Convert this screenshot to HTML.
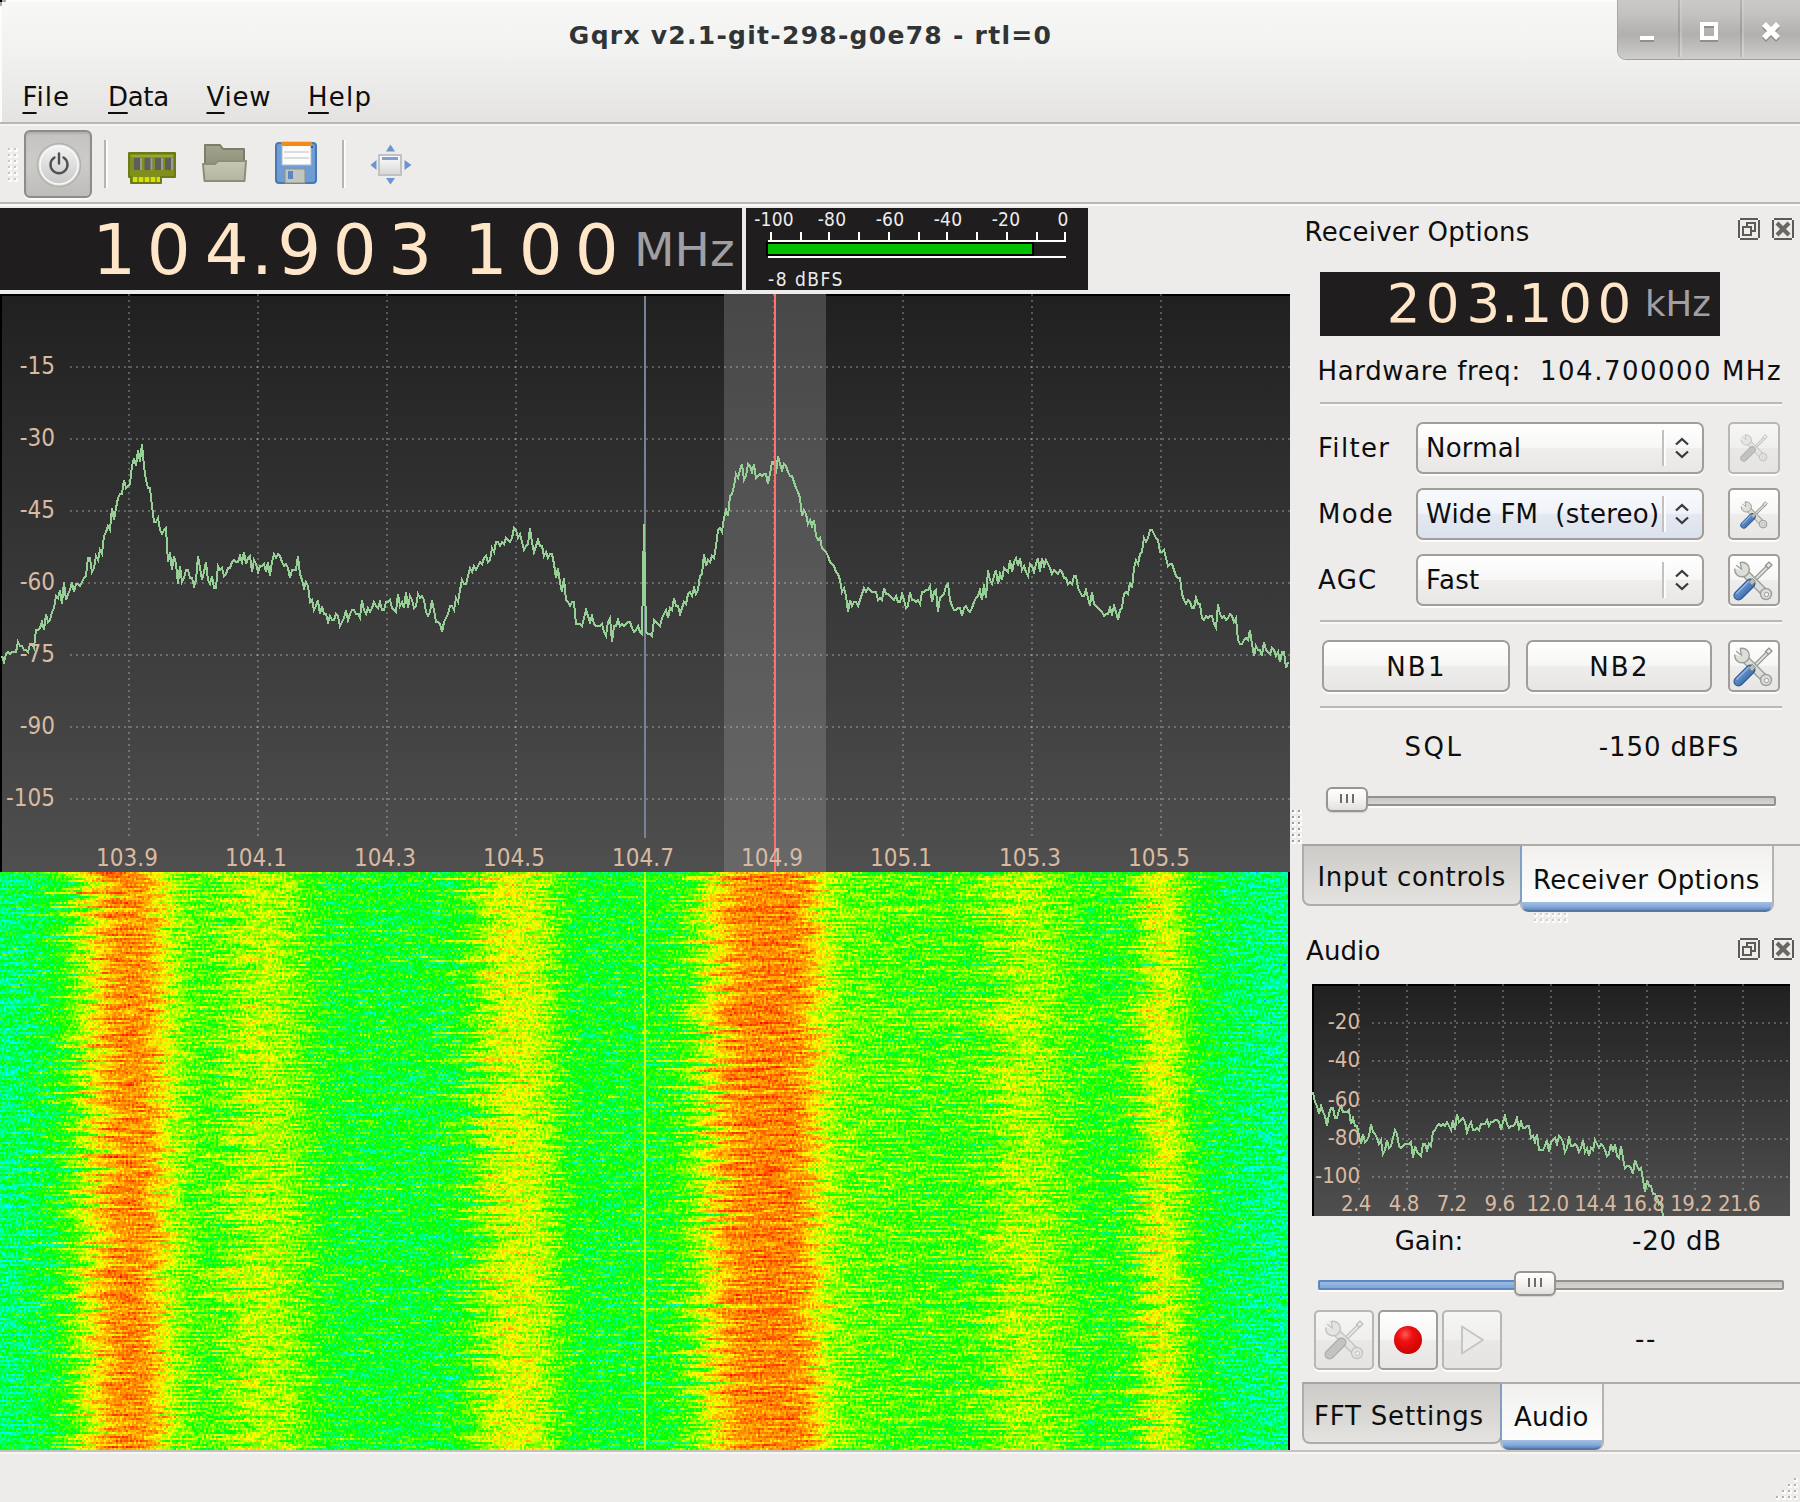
<!DOCTYPE html>
<html lang="en"><head><meta charset="utf-8"><title>Gqrx v2.1-git-298-g0e78 - rtl=0</title>
<style>
html,body{margin:0;padding:0}
body{width:1800px;height:1502px;overflow:hidden;background:#edeceb;position:relative;
 font-family:"DejaVu Sans","Liberation Sans",sans-serif;font-size:26px;color:#0e0e0e}
.a{position:absolute}
.t{position:absolute;white-space:nowrap;line-height:30px;height:30px}
.pf{font-family:"DejaVu Sans Condensed","DejaVu Sans","Liberation Sans",sans-serif}
.btn{position:absolute;box-sizing:border-box;border:2px solid #a19e99;border-radius:7px;
 background:linear-gradient(#ffffff,#f6f6f5 49%,#eeedec 51%,#e7e6e4);box-shadow:0 2px 0 rgba(255,255,255,.8)}
.tb{border-radius:5px}
.btn.dis{border-color:#b9b7b3;background:linear-gradient(#f6f6f5,#f0efee 49%,#e9e8e7 51%,#e5e4e2)}
.sep{position:absolute;height:2px;background:#bab8b4;box-shadow:0 2px 0 #f8f8f7}
svg{position:absolute;overflow:visible}
.bd{font-family:"DejaVu Sans","Liberation Sans",sans-serif}
</style></head><body>
<div class="a" style="left:0;top:0;width:1800px;height:122px;background:linear-gradient(#f8f8f7,#f1f1f0 45%,#e4e3e1)"></div>
<div class="a" style="left:0;top:0;width:1800px;height:2px;background:#fdfdfd"></div>
<div class="a" style="left:0;top:122px;width:1800px;height:2px;background:#b9b7b3"></div>
<div class="a" style="left:0;top:124px;width:1800px;height:2px;background:#f4f4f3"></div>
<div class="a" style="left:0;top:2px;width:2px;height:120px;background:#fcfcfc"></div>
<div class="a" style="left:0;top:0;width:2px;height:2px;background:#000"></div><div class="a" style="left:2px;top:0;width:4px;height:2px;background:#a9a9a8"></div><div class="a" style="left:0;top:2px;width:2px;height:4px;background:#a9a9a8"></div>
<div class="a" style="left:1798px;top:0;width:2px;height:2px;background:#000"></div><div class="a" style="left:1794px;top:0;width:4px;height:2px;background:#777"></div><div class="a" style="left:1798px;top:2px;width:2px;height:4px;background:#777"></div>
<div class="t" style="left:0;width:1620px;top:21px;text-align:center;font-weight:bold;font-size:25px;letter-spacing:1.27px;color:#303437;text-indent:1px">Gqrx v2.1-git-298-g0e78 - rtl=0</div>
<div class="a" style="left:1618px;top:0;width:182px;height:59px;border-radius:0 0 0 8px;background:linear-gradient(#cbc9c7,#c4c2c0 25%,#b1b0af 58%,#bfbebc 80%,#cfcecc);box-shadow:0 1px 0 #9f9e9c, -1px 0 0 #a9a8a6"></div>
<div class="a" style="left:1678px;top:0;width:2px;height:57px;background:linear-gradient(#b5b3b1,#9d9c9a 55%,#b9b8b6)"></div><div class="a" style="left:1680px;top:0;width:2px;height:57px;background:linear-gradient(#d3d1cf,#c0bfbd 55%,#d6d5d3)"></div>
<div class="a" style="left:1740px;top:0;width:2px;height:57px;background:linear-gradient(#b5b3b1,#9d9c9a 55%,#b9b8b6)"></div><div class="a" style="left:1742px;top:0;width:2px;height:57px;background:linear-gradient(#d3d1cf,#c0bfbd 55%,#d6d5d3)"></div>
<svg style="left:1618px;top:0" width="182" height="60" viewBox="1618 0 182 60"><g fill="#8f8e8c"><rect x="1640" y="38" width="14" height="4"/></g><rect x="1640" y="36" width="14" height="4" fill="#fff"/><rect x="1702" y="26" width="14" height="14" fill="none" stroke="#8f8e8c" stroke-width="4"/><rect x="1702" y="24" width="14" height="14" fill="none" stroke="#fff" stroke-width="4"/><path d="M1764 26 L1778 40 M1778 26 L1764 40" stroke="#8f8e8c" stroke-width="5.5" fill="none"/><path d="M1764 24 L1778 38 M1778 24 L1764 38" stroke="#fff" stroke-width="5.5" fill="none"/></svg>
<div class="t" style="left:22.5px;top:82px;letter-spacing:1.0px"><span style="text-decoration:underline;text-decoration-thickness:2px;text-underline-offset:6px">F</span>ile</div>
<div class="t" style="left:108px;top:82px;letter-spacing:-0.3px"><span style="text-decoration:underline;text-decoration-thickness:2px;text-underline-offset:6px">D</span>ata</div>
<div class="t" style="left:206.5px;top:82px;letter-spacing:0.8px"><span style="text-decoration:underline;text-decoration-thickness:2px;text-underline-offset:6px">V</span>iew</div>
<div class="t" style="left:308px;top:82px;letter-spacing:1.2px"><span style="text-decoration:underline;text-decoration-thickness:2px;text-underline-offset:6px">H</span>elp</div>
<div class="a" style="left:0;top:202px;width:1800px;height:2px;background:#b9b7b3"></div>
<div class="a" style="left:0;top:204px;width:1800px;height:2px;background:#f8f8f7"></div>
<svg style="left:0;top:0" width="30" height="200"><rect x="8" y="148" width="4" height="4" fill="#fbfbfa"/><rect x="8" y="148" width="2" height="2" fill="#c9c7c4"/><rect x="14" y="148" width="4" height="4" fill="#fbfbfa"/><rect x="14" y="148" width="2" height="2" fill="#c9c7c4"/><rect x="8" y="154" width="4" height="4" fill="#fbfbfa"/><rect x="8" y="154" width="2" height="2" fill="#c9c7c4"/><rect x="14" y="154" width="4" height="4" fill="#fbfbfa"/><rect x="14" y="154" width="2" height="2" fill="#c9c7c4"/><rect x="8" y="160" width="4" height="4" fill="#fbfbfa"/><rect x="8" y="160" width="2" height="2" fill="#c9c7c4"/><rect x="14" y="160" width="4" height="4" fill="#fbfbfa"/><rect x="14" y="160" width="2" height="2" fill="#c9c7c4"/><rect x="8" y="166" width="4" height="4" fill="#fbfbfa"/><rect x="8" y="166" width="2" height="2" fill="#c9c7c4"/><rect x="14" y="166" width="4" height="4" fill="#fbfbfa"/><rect x="14" y="166" width="2" height="2" fill="#c9c7c4"/><rect x="8" y="172" width="4" height="4" fill="#fbfbfa"/><rect x="8" y="172" width="2" height="2" fill="#c9c7c4"/><rect x="14" y="172" width="4" height="4" fill="#fbfbfa"/><rect x="14" y="172" width="2" height="2" fill="#c9c7c4"/><rect x="8" y="178" width="4" height="4" fill="#fbfbfa"/><rect x="8" y="178" width="2" height="2" fill="#c9c7c4"/><rect x="14" y="178" width="4" height="4" fill="#fbfbfa"/><rect x="14" y="178" width="2" height="2" fill="#c9c7c4"/></svg>
<div class="a" style="left:24px;top:130px;width:68px;height:68px;box-sizing:border-box;border:2px solid #8e8c88;border-radius:6px;background:linear-gradient(#c5c3c0,#cdcbc8 50%,#bebcb8);box-shadow:0 2px 0 #fafafa, inset 0 2px 2px rgba(0,0,0,.10)"></div>
<svg style="left:34px;top:140px" width="50" height="50" viewBox="0 0 50 50"><defs><linearGradient id="pw" x1="0" y1="0" x2="0" y2="1"><stop offset="0" stop-color="#f2f2f2"/><stop offset="1" stop-color="#c9c9c9"/></linearGradient></defs><circle cx="25" cy="25" r="21.5" fill="#d9d8d6" stroke="#b3b1ae" stroke-width="1.5"/><circle cx="25" cy="25" r="19" fill="url(#pw)" stroke="#fafafa" stroke-width="1.5"/><path d="M20.5 17.5 A8.5 8.5 0 1 0 29.5 17.5" fill="none" stroke="#505050" stroke-width="2.4" stroke-linecap="round"/><path d="M25 13.5 V23.5" stroke="#505050" stroke-width="2.4" stroke-linecap="round"/></svg>
<div class="a" style="left:104px;top:140px;width:2px;height:48px;background:#b6b4b0"></div><div class="a" style="left:106px;top:140px;width:2px;height:48px;background:#fbfbfa"></div>
<div class="a" style="left:342px;top:140px;width:2px;height:48px;background:#b6b4b0"></div><div class="a" style="left:344px;top:140px;width:2px;height:48px;background:#fbfbfa"></div>
<svg style="left:124px;top:146px" width="56" height="44" viewBox="124 146 56 44"><path d="M129 153 H175 V177 H161 V183 H131 V177 H129 Z" fill="#808e1d" stroke="#6e7a17" stroke-width="2" stroke-linejoin="round"/><rect x="131" y="155" width="42" height="2" fill="#9aa832"/><rect x="134" y="158" width="8" height="12" fill="#5d5f5b"/><rect x="140" y="158" width="2" height="12" fill="#9b9d90"/><rect x="144.5" y="158" width="8" height="12" fill="#5d5f5b"/><rect x="150.5" y="158" width="2" height="12" fill="#9b9d90"/><rect x="155" y="158" width="8" height="12" fill="#5d5f5b"/><rect x="161" y="158" width="2" height="12" fill="#9b9d90"/><rect x="165" y="158" width="8" height="12" fill="#5d5f5b"/><rect x="171" y="158" width="2" height="12" fill="#9b9d90"/><rect x="133" y="177" width="27" height="5" fill="#d4e300"/><rect x="137" y="177" width="2" height="5" fill="#98a510"/><rect x="143" y="177" width="2" height="5" fill="#98a510"/><rect x="149" y="177" width="2" height="5" fill="#98a510"/><rect x="155" y="177" width="2" height="5" fill="#98a510"/></svg>
<svg style="left:196px;top:138px" width="56" height="50" viewBox="196 138 56 50"><defs><linearGradient id="fo1" x1="0" y1="0" x2="0" y2="1"><stop offset="0" stop-color="#a3a48d"/><stop offset="1" stop-color="#84856f"/></linearGradient><linearGradient id="fo2" x1="0" y1="0" x2="0" y2="1"><stop offset="0" stop-color="#c6c7b4"/><stop offset="1" stop-color="#b4b5a0"/></linearGradient></defs><path d="M205 145 H220 L223 149 H244 V178 H205 Z" fill="url(#fo1)" stroke="#7d7e69" stroke-width="2" stroke-linejoin="round"/><path d="M203 164 H215 L218 161 H246 L244.500 181 H204.500 Z" fill="url(#fo2)" stroke="#8d8e79" stroke-width="2" stroke-linejoin="round"/></svg>
<svg style="left:272px;top:138px" width="50" height="50" viewBox="272 138 50 50"><path d="M279 143 H313 Q316 143 316 146 V180 Q316 183 313 183 H279 Q276 183 276 180 V146 Q276 143 279 143 Z" fill="#6f9cd3" stroke="#4a78b4" stroke-width="2"/><rect x="282" y="142" width="29" height="23" fill="#fdfdfd" stroke="#a9bcd6" stroke-width="1"/><rect x="282" y="142" width="29" height="4" fill="#f58a17"/><rect x="284" y="151" width="25" height="2" fill="#dcdcdc"/><rect x="284" y="157" width="25" height="2" fill="#dcdcdc"/><rect x="285" y="169" width="20" height="14" fill="#c3c5bf" stroke="#8f918b" stroke-width="1"/><rect x="288" y="171" width="5" height="8" fill="#5b86c2"/><rect x="311" y="146" width="2" height="2" fill="#33578c"/></svg>
<svg style="left:364px;top:140px" width="54" height="50" viewBox="364 140 54 50"><defs><linearGradient id="fs" x1="0" y1="0" x2="0" y2="1"><stop offset="0" stop-color="#ffffff"/><stop offset="1" stop-color="#d6d6d6"/></linearGradient></defs><rect x="379" y="155" width="22" height="20" fill="url(#fs)" stroke="#c2c2c0" stroke-width="2"/><rect x="382" y="157" width="16" height="3" fill="#7ea1d2"/><g fill="#6b95cf"><path d="M390.500 144.500 L395 151.500 H386 Z"/><path d="M390.500 184.500 L395 178 H386 Z"/><path d="M370.500 165 L376.500 160 V170 Z"/><path d="M411.500 165 L404.500 160 V170 Z"/></g></svg>
<div class="a" style="left:0;top:208px;width:742px;height:82px;background:#1f1d1d"></div>
<div class="t bd" style="left:84.25px;width:60px;top:208.5px;height:82px;line-height:82px;text-align:center;font-size:69px;color:#ffe6c8">1</div>
<div class="t bd" style="left:138.75px;width:60px;top:208.5px;height:82px;line-height:82px;text-align:center;font-size:69px;color:#ffe6c8">0</div>
<div class="t bd" style="left:196.75px;width:60px;top:208.5px;height:82px;line-height:82px;text-align:center;font-size:69px;color:#ffe6c8">4</div>
<div class="t bd" style="left:269.25px;width:60px;top:208.5px;height:82px;line-height:82px;text-align:center;font-size:69px;color:#ffe6c8">9</div>
<div class="t bd" style="left:324.75px;width:60px;top:208.5px;height:82px;line-height:82px;text-align:center;font-size:69px;color:#ffe6c8">0</div>
<div class="t bd" style="left:380.25px;width:60px;top:208.5px;height:82px;line-height:82px;text-align:center;font-size:69px;color:#ffe6c8">3</div>
<div class="t bd" style="left:455.75px;width:60px;top:208.5px;height:82px;line-height:82px;text-align:center;font-size:69px;color:#ffe6c8">1</div>
<div class="t bd" style="left:510.75px;width:60px;top:208.5px;height:82px;line-height:82px;text-align:center;font-size:69px;color:#ffe6c8">0</div>
<div class="t bd" style="left:566.75px;width:60px;top:208.5px;height:82px;line-height:82px;text-align:center;font-size:69px;color:#ffe6c8">0</div>
<div class="t bd" style="left:247.00px;width:30px;top:208.5px;height:82px;line-height:82px;text-align:center;font-size:69px;color:#ffe6c8">.</div>
<div class="t bd" style="left:634px;top:208.500px;height:82px;line-height:82px;font-size:47px;color:#a0a0a4">MHz</div>
<div class="a" style="left:746px;top:208px;width:342px;height:82px;background:#1f1d1d"></div>
<svg style="left:746px;top:208px" width="342" height="82" viewBox="746 208 342 82" shape-rendering="crispEdges"><rect x="768" y="240" width="298" height="2" fill="#fff"/><rect x="770" y="232" width="2" height="8" fill="#fff"/><rect x="800" y="232" width="2" height="8" fill="#fff"/><rect x="828" y="232" width="2" height="8" fill="#fff"/><rect x="858" y="232" width="2" height="8" fill="#fff"/><rect x="888" y="232" width="2" height="8" fill="#fff"/><rect x="918" y="232" width="2" height="8" fill="#fff"/><rect x="946" y="232" width="2" height="8" fill="#fff"/><rect x="976" y="232" width="2" height="8" fill="#fff"/><rect x="1006" y="232" width="2" height="8" fill="#fff"/><rect x="1036" y="232" width="2" height="8" fill="#fff"/><rect x="1064" y="232" width="2" height="8" fill="#fff"/><rect x="766" y="242" width="268" height="14" fill="#000"/><rect x="768" y="244" width="264" height="10" fill="#00be00"/><rect x="768" y="256" width="298" height="2" fill="#fff"/></svg>
<div class="t pf" style="left:734px;width:80px;text-align:center;top:204px;font-size:19px;color:#ececec;letter-spacing:0.2px">-100</div>
<div class="t pf" style="left:792px;width:80px;text-align:center;top:204px;font-size:19px;color:#ececec;letter-spacing:0.2px">-80</div>
<div class="t pf" style="left:850px;width:80px;text-align:center;top:204px;font-size:19px;color:#ececec;letter-spacing:0.2px">-60</div>
<div class="t pf" style="left:908px;width:80px;text-align:center;top:204px;font-size:19px;color:#ececec;letter-spacing:0.2px">-40</div>
<div class="t pf" style="left:966px;width:80px;text-align:center;top:204px;font-size:19px;color:#ececec;letter-spacing:0.2px">-20</div>
<div class="t pf" style="left:1023px;width:80px;text-align:center;top:204px;font-size:19px;color:#ececec;letter-spacing:0.2px">0</div>
<div class="t pf" style="left:768px;top:264px;font-size:19px;color:#ececec;letter-spacing:1.5px">-8 dBFS</div>
<svg style="left:0;top:294px" width="1290" height="578" viewBox="0 294 1290 578"><defs><linearGradient id="pg" x1="0" y1="0" x2="0" y2="1"><stop offset="0" stop-color="#202020"/><stop offset="1" stop-color="#4f4f4f"/></linearGradient></defs><rect x="0" y="294" width="1290" height="578" fill="url(#pg)"/><rect x="0" y="294" width="1290" height="2" fill="#000"/><rect x="0" y="294" width="2" height="578" fill="#000"/><rect x="724" y="294" width="102" height="2" fill="#434343"/><rect x="724" y="296" width="102" height="576" fill="#a0a0a4" fill-opacity="0.31"/><g stroke="#f0f0f0" stroke-opacity="0.27" stroke-width="2" stroke-dasharray="2 4" shape-rendering="crispEdges"><path d="M129 294V836"/><path d="M258 294V836"/><path d="M387 294V836"/><path d="M516 294V836"/><path d="M774 294V836"/><path d="M903 294V836"/><path d="M1032 294V836"/><path d="M1161 294V836"/><path d="M70 367H1290"/><path d="M70 439H1290"/><path d="M70 511H1290"/><path d="M70 583H1290"/><path d="M70 655H1290"/><path d="M70 727H1290"/><path d="M70 799H1290"/></g><rect x="644" y="296" width="2" height="542" fill="#788296" shape-rendering="crispEdges"/><path d="M2 656L4 662L6 654L8 652L10 654L12 652L14 652L16 652L18 642L20 646L22 646L24 650L26 650L28 652L30 644L32 644L34 648L36 630L38 630L40 628L42 622L44 630L46 614L48 622L50 620L52 612L54 608L56 596L58 598L60 590L62 604L64 582L66 600L68 594L70 590L72 582L74 592L76 584L78 584L80 586L82 582L84 578L86 576L88 558L90 558L92 572L94 568L96 556L98 560L100 550L102 554L104 536L106 532L108 526L110 530L112 508L114 520L116 508L118 498L120 494L122 494L124 480L126 488L128 486L130 484L132 466L134 458L136 466L138 450L140 462L142 444L144 466L146 480L148 488L150 488L152 506L154 522L156 522L158 518L160 530L162 534L164 530L166 528L168 562L170 552L172 570L174 556L176 564L178 584L180 566L182 582L184 578L186 570L188 570L190 578L192 578L194 586L196 580L198 556L200 568L202 580L204 572L206 562L208 580L210 584L212 576L214 588L216 588L218 566L220 570L222 568L224 576L226 574L228 568L230 568L232 562L234 560L236 562L238 562L240 556L242 562L244 552L246 564L248 558L250 556L252 572L254 560L256 564L258 572L260 566L262 566L264 564L266 572L268 562L270 576L272 562L274 554L276 558L278 554L280 556L282 562L284 566L286 564L288 568L290 578L292 570L294 570L296 570L298 556L300 574L302 580L304 588L306 582L308 586L310 602L312 600L314 610L316 606L318 600L320 614L322 606L324 614L326 614L328 622L330 616L332 620L334 620L336 614L338 616L340 626L342 622L344 618L346 610L348 620L350 614L352 610L354 610L356 614L358 614L360 618L362 600L364 610L366 614L368 608L370 612L372 608L374 602L376 606L378 608L380 602L382 610L384 610L386 602L388 602L390 600L392 608L394 610L396 612L398 594L400 606L402 602L404 608L406 592L408 608L410 596L412 600L414 608L416 606L418 594L420 598L422 596L424 600L426 612L428 616L430 612L432 600L434 610L436 622L438 622L440 624L442 632L444 622L446 618L448 614L450 606L452 606L454 610L456 598L458 602L460 590L462 580L464 584L466 584L468 576L470 568L472 572L474 566L476 570L478 566L480 562L482 564L484 558L486 556L488 562L490 560L492 548L494 552L496 542L498 542L500 546L502 542L504 544L506 538L508 540L510 542L512 538L514 528L516 530L518 538L520 534L522 542L524 550L526 546L528 544L530 528L532 542L534 552L536 546L538 540L540 546L542 546L544 556L546 552L548 558L550 554L552 554L554 564L556 578L558 568L560 582L562 592L564 578L566 600L568 602L570 606L572 602L574 602L576 624L578 624L580 624L582 626L584 618L586 610L588 616L590 622L592 616L594 624L596 626L598 626L600 626L602 624L604 632L606 636L608 622L610 618L612 642L614 626L616 626L618 620L620 626L622 624L624 626L626 624L628 622L630 622L632 628L634 632L636 630L638 626L640 632L642 634L644 524L646 632L648 634L650 634L652 636L654 620L656 622L658 624L660 626L662 618L664 614L666 610L668 618L670 608L672 610L674 598L676 606L678 606L680 614L682 608L684 602L686 604L688 594L690 592L692 596L694 588L696 594L698 590L700 576L702 574L704 554L706 566L708 560L710 562L712 556L714 558L716 546L718 530L720 528L722 532L724 518L726 510L728 516L730 496L732 494L734 486L736 474L738 478L740 470L742 464L744 480L746 476L748 464L750 466L752 472L754 464L756 478L758 476L760 474L762 476L764 474L766 474L768 484L770 474L772 462L774 462L776 474L778 456L780 464L782 470L784 464L786 466L788 472L790 476L792 476L794 482L796 488L798 492L800 498L802 516L804 510L806 514L808 524L810 520L812 526L814 520L816 536L818 540L820 538L822 548L824 550L826 552L828 556L830 562L832 564L834 566L836 572L838 574L840 580L842 592L844 588L846 596L848 612L850 600L852 606L854 602L856 602L858 606L860 600L862 594L864 588L866 592L868 588L870 590L872 592L874 592L876 592L878 600L880 598L882 600L884 588L886 594L888 594L890 596L892 598L894 600L896 596L898 602L900 602L902 594L904 600L906 608L908 606L910 592L912 600L914 600L916 602L918 600L920 604L922 592L924 592L926 590L928 590L930 586L932 602L934 592L936 590L938 612L940 598L942 596L944 594L946 586L948 584L950 600L952 606L954 610L956 610L958 608L960 608L962 616L964 608L966 606L968 610L970 612L972 608L974 602L976 598L978 596L980 590L982 600L984 584L986 598L988 570L990 580L992 584L994 576L996 570L998 584L1000 574L1002 580L1004 568L1006 570L1008 572L1010 560L1012 572L1014 562L1016 558L1018 566L1020 558L1022 570L1024 566L1026 572L1028 576L1030 564L1032 566L1034 572L1036 564L1038 558L1040 572L1042 558L1044 566L1046 560L1048 564L1050 568L1052 574L1054 570L1056 572L1058 574L1060 570L1062 572L1064 578L1066 578L1068 584L1070 582L1072 584L1074 576L1076 576L1078 588L1080 592L1082 596L1084 596L1086 590L1088 598L1090 606L1092 592L1094 604L1096 606L1098 608L1100 610L1102 612L1104 616L1106 614L1108 614L1110 608L1112 614L1114 606L1116 612L1118 620L1120 610L1122 608L1124 594L1126 592L1128 594L1130 582L1132 588L1134 568L1136 560L1138 564L1140 554L1142 552L1144 538L1146 542L1148 538L1150 530L1152 530L1154 534L1156 538L1158 540L1160 552L1162 552L1164 550L1166 558L1168 566L1170 564L1172 564L1174 570L1176 576L1178 578L1180 578L1182 594L1184 600L1186 604L1188 600L1190 602L1192 608L1194 608L1196 598L1198 604L1200 604L1202 618L1204 620L1206 616L1208 618L1210 616L1212 616L1214 624L1216 628L1218 604L1220 614L1222 618L1224 616L1226 620L1228 618L1230 614L1232 616L1234 622L1236 618L1238 640L1240 644L1242 644L1244 640L1246 638L1248 640L1250 630L1252 644L1254 656L1256 646L1258 650L1260 650L1262 656L1264 642L1266 650L1268 652L1270 654L1272 648L1274 650L1276 656L1278 652L1280 662L1282 652L1284 652L1286 668L1288 662" fill="none" stroke="#97d097" stroke-width="2" stroke-linejoin="miter" shape-rendering="crispEdges"/><rect x="774" y="294" width="2" height="578" fill="#ff7171" shape-rendering="crispEdges"/></svg>
<div class="t pf" style="left:0;width:55px;text-align:right;top:351px;font-size:24px;color:#d8baa1">-15</div>
<div class="t pf" style="left:0;width:55px;text-align:right;top:423px;font-size:24px;color:#d8baa1">-30</div>
<div class="t pf" style="left:0;width:55px;text-align:right;top:495px;font-size:24px;color:#d8baa1">-45</div>
<div class="t pf" style="left:0;width:55px;text-align:right;top:567px;font-size:24px;color:#d8baa1">-60</div>
<div class="t pf" style="left:0;width:55px;text-align:right;top:639px;font-size:24px;color:#d8baa1">-75</div>
<div class="t pf" style="left:0;width:55px;text-align:right;top:711px;font-size:24px;color:#d8baa1">-90</div>
<div class="t pf" style="left:0;width:55px;text-align:right;top:783px;font-size:24px;color:#d8baa1">-105</div>
<div class="t pf" style="left:77px;width:100px;text-align:center;top:843px;font-size:24px;color:#d8baa1">103.9</div>
<div class="t pf" style="left:206px;width:100px;text-align:center;top:843px;font-size:24px;color:#d8baa1">104.1</div>
<div class="t pf" style="left:335px;width:100px;text-align:center;top:843px;font-size:24px;color:#d8baa1">104.3</div>
<div class="t pf" style="left:464px;width:100px;text-align:center;top:843px;font-size:24px;color:#d8baa1">104.5</div>
<div class="t pf" style="left:593px;width:100px;text-align:center;top:843px;font-size:24px;color:#d8baa1">104.7</div>
<div class="t pf" style="left:722px;width:100px;text-align:center;top:843px;font-size:24px;color:#d8baa1">104.9</div>
<div class="t pf" style="left:851px;width:100px;text-align:center;top:843px;font-size:24px;color:#d8baa1">105.1</div>
<div class="t pf" style="left:980px;width:100px;text-align:center;top:843px;font-size:24px;color:#d8baa1">105.3</div>
<div class="t pf" style="left:1109px;width:100px;text-align:center;top:843px;font-size:24px;color:#d8baa1">105.5</div>
<svg style="left:0;top:872px;overflow:hidden" width="1290" height="578" viewBox="0 0 1290 578"><defs><linearGradient id="wg" gradientUnits="userSpaceOnUse" x1="-60" y1="0" x2="1350" y2="0"><stop offset="0.0000" stop-color="rgb(106,106,106)"/><stop offset="0.0021" stop-color="rgb(106,106,106)"/><stop offset="0.0043" stop-color="rgb(106,106,106)"/><stop offset="0.0064" stop-color="rgb(106,106,106)"/><stop offset="0.0085" stop-color="rgb(106,106,106)"/><stop offset="0.0106" stop-color="rgb(106,106,106)"/><stop offset="0.0128" stop-color="rgb(106,106,106)"/><stop offset="0.0149" stop-color="rgb(106,106,106)"/><stop offset="0.0170" stop-color="rgb(106,106,106)"/><stop offset="0.0191" stop-color="rgb(106,106,106)"/><stop offset="0.0213" stop-color="rgb(106,106,106)"/><stop offset="0.0234" stop-color="rgb(106,106,106)"/><stop offset="0.0255" stop-color="rgb(106,106,106)"/><stop offset="0.0277" stop-color="rgb(106,106,106)"/><stop offset="0.0298" stop-color="rgb(106,106,106)"/><stop offset="0.0319" stop-color="rgb(106,106,106)"/><stop offset="0.0340" stop-color="rgb(106,106,106)"/><stop offset="0.0362" stop-color="rgb(106,106,106)"/><stop offset="0.0383" stop-color="rgb(106,106,106)"/><stop offset="0.0404" stop-color="rgb(106,106,106)"/><stop offset="0.0426" stop-color="rgb(106,106,106)"/><stop offset="0.0447" stop-color="rgb(106,106,106)"/><stop offset="0.0468" stop-color="rgb(106,106,106)"/><stop offset="0.0489" stop-color="rgb(106,106,106)"/><stop offset="0.0511" stop-color="rgb(107,107,107)"/><stop offset="0.0532" stop-color="rgb(107,107,107)"/><stop offset="0.0553" stop-color="rgb(107,107,107)"/><stop offset="0.0574" stop-color="rgb(108,108,108)"/><stop offset="0.0596" stop-color="rgb(109,109,109)"/><stop offset="0.0617" stop-color="rgb(110,110,110)"/><stop offset="0.0638" stop-color="rgb(111,111,111)"/><stop offset="0.0660" stop-color="rgb(112,112,112)"/><stop offset="0.0681" stop-color="rgb(113,113,113)"/><stop offset="0.0702" stop-color="rgb(114,114,114)"/><stop offset="0.0723" stop-color="rgb(115,115,115)"/><stop offset="0.0745" stop-color="rgb(116,116,116)"/><stop offset="0.0766" stop-color="rgb(117,117,117)"/><stop offset="0.0787" stop-color="rgb(118,118,118)"/><stop offset="0.0809" stop-color="rgb(119,119,119)"/><stop offset="0.0830" stop-color="rgb(120,120,120)"/><stop offset="0.0851" stop-color="rgb(122,122,122)"/><stop offset="0.0872" stop-color="rgb(124,124,124)"/><stop offset="0.0894" stop-color="rgb(126,126,126)"/><stop offset="0.0915" stop-color="rgb(129,129,129)"/><stop offset="0.0936" stop-color="rgb(132,132,132)"/><stop offset="0.0957" stop-color="rgb(136,136,136)"/><stop offset="0.0979" stop-color="rgb(139,139,139)"/><stop offset="0.1000" stop-color="rgb(142,142,142)"/><stop offset="0.1021" stop-color="rgb(146,146,146)"/><stop offset="0.1043" stop-color="rgb(149,149,149)"/><stop offset="0.1064" stop-color="rgb(152,152,152)"/><stop offset="0.1085" stop-color="rgb(156,156,156)"/><stop offset="0.1106" stop-color="rgb(159,159,159)"/><stop offset="0.1128" stop-color="rgb(163,163,163)"/><stop offset="0.1149" stop-color="rgb(167,167,167)"/><stop offset="0.1170" stop-color="rgb(171,171,171)"/><stop offset="0.1191" stop-color="rgb(174,174,174)"/><stop offset="0.1213" stop-color="rgb(177,177,177)"/><stop offset="0.1234" stop-color="rgb(179,179,179)"/><stop offset="0.1255" stop-color="rgb(180,180,180)"/><stop offset="0.1277" stop-color="rgb(181,181,181)"/><stop offset="0.1298" stop-color="rgb(182,182,182)"/><stop offset="0.1319" stop-color="rgb(182,182,182)"/><stop offset="0.1340" stop-color="rgb(183,183,183)"/><stop offset="0.1362" stop-color="rgb(182,182,182)"/><stop offset="0.1383" stop-color="rgb(182,182,182)"/><stop offset="0.1404" stop-color="rgb(182,182,182)"/><stop offset="0.1426" stop-color="rgb(181,181,181)"/><stop offset="0.1447" stop-color="rgb(180,180,180)"/><stop offset="0.1468" stop-color="rgb(177,177,177)"/><stop offset="0.1489" stop-color="rgb(174,174,174)"/><stop offset="0.1511" stop-color="rgb(170,170,170)"/><stop offset="0.1532" stop-color="rgb(164,164,164)"/><stop offset="0.1553" stop-color="rgb(160,160,160)"/><stop offset="0.1574" stop-color="rgb(156,156,156)"/><stop offset="0.1596" stop-color="rgb(151,151,151)"/><stop offset="0.1617" stop-color="rgb(148,148,148)"/><stop offset="0.1638" stop-color="rgb(145,145,145)"/><stop offset="0.1660" stop-color="rgb(143,143,143)"/><stop offset="0.1681" stop-color="rgb(140,140,140)"/><stop offset="0.1702" stop-color="rgb(138,138,138)"/><stop offset="0.1723" stop-color="rgb(136,136,136)"/><stop offset="0.1745" stop-color="rgb(134,134,134)"/><stop offset="0.1766" stop-color="rgb(132,132,132)"/><stop offset="0.1787" stop-color="rgb(131,131,131)"/><stop offset="0.1809" stop-color="rgb(130,130,130)"/><stop offset="0.1830" stop-color="rgb(130,130,130)"/><stop offset="0.1851" stop-color="rgb(130,130,130)"/><stop offset="0.1872" stop-color="rgb(130,130,130)"/><stop offset="0.1894" stop-color="rgb(129,129,129)"/><stop offset="0.1915" stop-color="rgb(129,129,129)"/><stop offset="0.1936" stop-color="rgb(130,130,130)"/><stop offset="0.1957" stop-color="rgb(131,131,131)"/><stop offset="0.1979" stop-color="rgb(133,133,133)"/><stop offset="0.2000" stop-color="rgb(134,134,134)"/><stop offset="0.2021" stop-color="rgb(135,135,135)"/><stop offset="0.2043" stop-color="rgb(136,136,136)"/><stop offset="0.2064" stop-color="rgb(138,138,138)"/><stop offset="0.2085" stop-color="rgb(139,139,139)"/><stop offset="0.2106" stop-color="rgb(141,141,141)"/><stop offset="0.2128" stop-color="rgb(142,142,142)"/><stop offset="0.2149" stop-color="rgb(142,142,142)"/><stop offset="0.2170" stop-color="rgb(143,143,143)"/><stop offset="0.2191" stop-color="rgb(143,143,143)"/><stop offset="0.2213" stop-color="rgb(143,143,143)"/><stop offset="0.2234" stop-color="rgb(144,144,144)"/><stop offset="0.2255" stop-color="rgb(144,144,144)"/><stop offset="0.2277" stop-color="rgb(144,144,144)"/><stop offset="0.2298" stop-color="rgb(144,144,144)"/><stop offset="0.2319" stop-color="rgb(143,143,143)"/><stop offset="0.2340" stop-color="rgb(143,143,143)"/><stop offset="0.2362" stop-color="rgb(143,143,143)"/><stop offset="0.2383" stop-color="rgb(142,142,142)"/><stop offset="0.2404" stop-color="rgb(142,142,142)"/><stop offset="0.2426" stop-color="rgb(141,141,141)"/><stop offset="0.2447" stop-color="rgb(140,140,140)"/><stop offset="0.2468" stop-color="rgb(138,138,138)"/><stop offset="0.2489" stop-color="rgb(137,137,137)"/><stop offset="0.2511" stop-color="rgb(135,135,135)"/><stop offset="0.2532" stop-color="rgb(134,134,134)"/><stop offset="0.2553" stop-color="rgb(132,132,132)"/><stop offset="0.2574" stop-color="rgb(131,131,131)"/><stop offset="0.2596" stop-color="rgb(129,129,129)"/><stop offset="0.2617" stop-color="rgb(128,128,128)"/><stop offset="0.2638" stop-color="rgb(126,126,126)"/><stop offset="0.2660" stop-color="rgb(125,125,125)"/><stop offset="0.2681" stop-color="rgb(124,124,124)"/><stop offset="0.2702" stop-color="rgb(123,123,123)"/><stop offset="0.2723" stop-color="rgb(121,121,121)"/><stop offset="0.2745" stop-color="rgb(121,121,121)"/><stop offset="0.2766" stop-color="rgb(120,120,120)"/><stop offset="0.2787" stop-color="rgb(120,120,120)"/><stop offset="0.2809" stop-color="rgb(119,119,119)"/><stop offset="0.2830" stop-color="rgb(119,119,119)"/><stop offset="0.2851" stop-color="rgb(118,118,118)"/><stop offset="0.2872" stop-color="rgb(118,118,118)"/><stop offset="0.2894" stop-color="rgb(118,118,118)"/><stop offset="0.2915" stop-color="rgb(118,118,118)"/><stop offset="0.2936" stop-color="rgb(118,118,118)"/><stop offset="0.2957" stop-color="rgb(118,118,118)"/><stop offset="0.2979" stop-color="rgb(118,118,118)"/><stop offset="0.3000" stop-color="rgb(118,118,118)"/><stop offset="0.3021" stop-color="rgb(118,118,118)"/><stop offset="0.3043" stop-color="rgb(118,118,118)"/><stop offset="0.3064" stop-color="rgb(118,118,118)"/><stop offset="0.3085" stop-color="rgb(117,117,117)"/><stop offset="0.3106" stop-color="rgb(117,117,117)"/><stop offset="0.3128" stop-color="rgb(117,117,117)"/><stop offset="0.3149" stop-color="rgb(117,117,117)"/><stop offset="0.3170" stop-color="rgb(117,117,117)"/><stop offset="0.3191" stop-color="rgb(117,117,117)"/><stop offset="0.3213" stop-color="rgb(117,117,117)"/><stop offset="0.3234" stop-color="rgb(117,117,117)"/><stop offset="0.3255" stop-color="rgb(117,117,117)"/><stop offset="0.3277" stop-color="rgb(117,117,117)"/><stop offset="0.3298" stop-color="rgb(117,117,117)"/><stop offset="0.3319" stop-color="rgb(117,117,117)"/><stop offset="0.3340" stop-color="rgb(117,117,117)"/><stop offset="0.3362" stop-color="rgb(117,117,117)"/><stop offset="0.3383" stop-color="rgb(117,117,117)"/><stop offset="0.3404" stop-color="rgb(117,117,117)"/><stop offset="0.3426" stop-color="rgb(117,117,117)"/><stop offset="0.3447" stop-color="rgb(117,117,117)"/><stop offset="0.3468" stop-color="rgb(117,117,117)"/><stop offset="0.3489" stop-color="rgb(117,117,117)"/><stop offset="0.3511" stop-color="rgb(117,117,117)"/><stop offset="0.3532" stop-color="rgb(117,117,117)"/><stop offset="0.3553" stop-color="rgb(117,117,117)"/><stop offset="0.3574" stop-color="rgb(118,118,118)"/><stop offset="0.3596" stop-color="rgb(119,119,119)"/><stop offset="0.3617" stop-color="rgb(119,119,119)"/><stop offset="0.3638" stop-color="rgb(120,120,120)"/><stop offset="0.3660" stop-color="rgb(121,121,121)"/><stop offset="0.3681" stop-color="rgb(122,122,122)"/><stop offset="0.3702" stop-color="rgb(123,123,123)"/><stop offset="0.3723" stop-color="rgb(125,125,125)"/><stop offset="0.3745" stop-color="rgb(127,127,127)"/><stop offset="0.3766" stop-color="rgb(129,129,129)"/><stop offset="0.3787" stop-color="rgb(131,131,131)"/><stop offset="0.3809" stop-color="rgb(134,134,134)"/><stop offset="0.3830" stop-color="rgb(136,136,136)"/><stop offset="0.3851" stop-color="rgb(139,139,139)"/><stop offset="0.3872" stop-color="rgb(141,141,141)"/><stop offset="0.3894" stop-color="rgb(143,143,143)"/><stop offset="0.3915" stop-color="rgb(145,145,145)"/><stop offset="0.3936" stop-color="rgb(146,146,146)"/><stop offset="0.3957" stop-color="rgb(147,147,147)"/><stop offset="0.3979" stop-color="rgb(148,148,148)"/><stop offset="0.4000" stop-color="rgb(148,148,148)"/><stop offset="0.4021" stop-color="rgb(149,149,149)"/><stop offset="0.4043" stop-color="rgb(150,150,150)"/><stop offset="0.4064" stop-color="rgb(150,150,150)"/><stop offset="0.4085" stop-color="rgb(150,150,150)"/><stop offset="0.4106" stop-color="rgb(149,149,149)"/><stop offset="0.4128" stop-color="rgb(149,149,149)"/><stop offset="0.4149" stop-color="rgb(149,149,149)"/><stop offset="0.4170" stop-color="rgb(148,148,148)"/><stop offset="0.4191" stop-color="rgb(148,148,148)"/><stop offset="0.4213" stop-color="rgb(147,147,147)"/><stop offset="0.4234" stop-color="rgb(146,146,146)"/><stop offset="0.4255" stop-color="rgb(144,144,144)"/><stop offset="0.4277" stop-color="rgb(142,142,142)"/><stop offset="0.4298" stop-color="rgb(141,141,141)"/><stop offset="0.4319" stop-color="rgb(138,138,138)"/><stop offset="0.4340" stop-color="rgb(135,135,135)"/><stop offset="0.4362" stop-color="rgb(132,132,132)"/><stop offset="0.4383" stop-color="rgb(129,129,129)"/><stop offset="0.4404" stop-color="rgb(127,127,127)"/><stop offset="0.4426" stop-color="rgb(125,125,125)"/><stop offset="0.4447" stop-color="rgb(123,123,123)"/><stop offset="0.4468" stop-color="rgb(122,122,122)"/><stop offset="0.4489" stop-color="rgb(120,120,120)"/><stop offset="0.4511" stop-color="rgb(119,119,119)"/><stop offset="0.4532" stop-color="rgb(118,118,118)"/><stop offset="0.4553" stop-color="rgb(118,118,118)"/><stop offset="0.4574" stop-color="rgb(118,118,118)"/><stop offset="0.4596" stop-color="rgb(118,118,118)"/><stop offset="0.4617" stop-color="rgb(118,118,118)"/><stop offset="0.4638" stop-color="rgb(118,118,118)"/><stop offset="0.4660" stop-color="rgb(117,117,117)"/><stop offset="0.4681" stop-color="rgb(117,117,117)"/><stop offset="0.4702" stop-color="rgb(117,117,117)"/><stop offset="0.4723" stop-color="rgb(117,117,117)"/><stop offset="0.4745" stop-color="rgb(117,117,117)"/><stop offset="0.4766" stop-color="rgb(117,117,117)"/><stop offset="0.4787" stop-color="rgb(117,117,117)"/><stop offset="0.4809" stop-color="rgb(117,117,117)"/><stop offset="0.4830" stop-color="rgb(117,117,117)"/><stop offset="0.4851" stop-color="rgb(117,117,117)"/><stop offset="0.4872" stop-color="rgb(118,118,118)"/><stop offset="0.4894" stop-color="rgb(118,118,118)"/><stop offset="0.4915" stop-color="rgb(118,118,118)"/><stop offset="0.4936" stop-color="rgb(118,118,118)"/><stop offset="0.4957" stop-color="rgb(118,118,118)"/><stop offset="0.4979" stop-color="rgb(118,118,118)"/><stop offset="0.5000" stop-color="rgb(118,118,118)"/><stop offset="0.5021" stop-color="rgb(119,119,119)"/><stop offset="0.5043" stop-color="rgb(119,119,119)"/><stop offset="0.5064" stop-color="rgb(119,119,119)"/><stop offset="0.5085" stop-color="rgb(120,120,120)"/><stop offset="0.5106" stop-color="rgb(120,120,120)"/><stop offset="0.5128" stop-color="rgb(121,121,121)"/><stop offset="0.5149" stop-color="rgb(122,122,122)"/><stop offset="0.5170" stop-color="rgb(122,122,122)"/><stop offset="0.5191" stop-color="rgb(123,123,123)"/><stop offset="0.5213" stop-color="rgb(124,124,124)"/><stop offset="0.5234" stop-color="rgb(124,124,124)"/><stop offset="0.5255" stop-color="rgb(126,126,126)"/><stop offset="0.5277" stop-color="rgb(128,128,128)"/><stop offset="0.5298" stop-color="rgb(130,130,130)"/><stop offset="0.5319" stop-color="rgb(131,131,131)"/><stop offset="0.5340" stop-color="rgb(133,133,133)"/><stop offset="0.5362" stop-color="rgb(136,136,136)"/><stop offset="0.5383" stop-color="rgb(140,140,140)"/><stop offset="0.5404" stop-color="rgb(143,143,143)"/><stop offset="0.5426" stop-color="rgb(146,146,146)"/><stop offset="0.5447" stop-color="rgb(149,149,149)"/><stop offset="0.5468" stop-color="rgb(153,153,153)"/><stop offset="0.5489" stop-color="rgb(156,156,156)"/><stop offset="0.5511" stop-color="rgb(160,160,160)"/><stop offset="0.5532" stop-color="rgb(164,164,164)"/><stop offset="0.5553" stop-color="rgb(168,168,168)"/><stop offset="0.5574" stop-color="rgb(171,171,171)"/><stop offset="0.5596" stop-color="rgb(174,174,174)"/><stop offset="0.5617" stop-color="rgb(177,177,177)"/><stop offset="0.5638" stop-color="rgb(179,179,179)"/><stop offset="0.5660" stop-color="rgb(180,180,180)"/><stop offset="0.5681" stop-color="rgb(181,181,181)"/><stop offset="0.5702" stop-color="rgb(182,182,182)"/><stop offset="0.5723" stop-color="rgb(182,182,182)"/><stop offset="0.5745" stop-color="rgb(182,182,182)"/><stop offset="0.5766" stop-color="rgb(183,183,183)"/><stop offset="0.5787" stop-color="rgb(183,183,183)"/><stop offset="0.5809" stop-color="rgb(183,183,183)"/><stop offset="0.5830" stop-color="rgb(183,183,183)"/><stop offset="0.5851" stop-color="rgb(183,183,183)"/><stop offset="0.5872" stop-color="rgb(184,184,184)"/><stop offset="0.5894" stop-color="rgb(184,184,184)"/><stop offset="0.5915" stop-color="rgb(184,184,184)"/><stop offset="0.5936" stop-color="rgb(184,184,184)"/><stop offset="0.5957" stop-color="rgb(184,184,184)"/><stop offset="0.5979" stop-color="rgb(183,183,183)"/><stop offset="0.6000" stop-color="rgb(183,183,183)"/><stop offset="0.6021" stop-color="rgb(183,183,183)"/><stop offset="0.6043" stop-color="rgb(183,183,183)"/><stop offset="0.6064" stop-color="rgb(182,182,182)"/><stop offset="0.6085" stop-color="rgb(182,182,182)"/><stop offset="0.6106" stop-color="rgb(180,180,180)"/><stop offset="0.6128" stop-color="rgb(178,178,178)"/><stop offset="0.6149" stop-color="rgb(175,175,175)"/><stop offset="0.6170" stop-color="rgb(170,170,170)"/><stop offset="0.6191" stop-color="rgb(164,164,164)"/><stop offset="0.6213" stop-color="rgb(159,159,159)"/><stop offset="0.6234" stop-color="rgb(155,155,155)"/><stop offset="0.6255" stop-color="rgb(151,151,151)"/><stop offset="0.6277" stop-color="rgb(148,148,148)"/><stop offset="0.6298" stop-color="rgb(145,145,145)"/><stop offset="0.6319" stop-color="rgb(142,142,142)"/><stop offset="0.6340" stop-color="rgb(140,140,140)"/><stop offset="0.6362" stop-color="rgb(138,138,138)"/><stop offset="0.6383" stop-color="rgb(136,136,136)"/><stop offset="0.6404" stop-color="rgb(135,135,135)"/><stop offset="0.6426" stop-color="rgb(134,134,134)"/><stop offset="0.6447" stop-color="rgb(134,134,134)"/><stop offset="0.6468" stop-color="rgb(134,134,134)"/><stop offset="0.6489" stop-color="rgb(133,133,133)"/><stop offset="0.6511" stop-color="rgb(133,133,133)"/><stop offset="0.6532" stop-color="rgb(132,132,132)"/><stop offset="0.6553" stop-color="rgb(132,132,132)"/><stop offset="0.6574" stop-color="rgb(131,131,131)"/><stop offset="0.6596" stop-color="rgb(131,131,131)"/><stop offset="0.6617" stop-color="rgb(131,131,131)"/><stop offset="0.6638" stop-color="rgb(131,131,131)"/><stop offset="0.6660" stop-color="rgb(130,130,130)"/><stop offset="0.6681" stop-color="rgb(130,130,130)"/><stop offset="0.6702" stop-color="rgb(130,130,130)"/><stop offset="0.6723" stop-color="rgb(130,130,130)"/><stop offset="0.6745" stop-color="rgb(130,130,130)"/><stop offset="0.6766" stop-color="rgb(129,129,129)"/><stop offset="0.6787" stop-color="rgb(129,129,129)"/><stop offset="0.6809" stop-color="rgb(129,129,129)"/><stop offset="0.6830" stop-color="rgb(129,129,129)"/><stop offset="0.6851" stop-color="rgb(129,129,129)"/><stop offset="0.6872" stop-color="rgb(129,129,129)"/><stop offset="0.6894" stop-color="rgb(129,129,129)"/><stop offset="0.6915" stop-color="rgb(128,128,128)"/><stop offset="0.6936" stop-color="rgb(128,128,128)"/><stop offset="0.6957" stop-color="rgb(128,128,128)"/><stop offset="0.6979" stop-color="rgb(128,128,128)"/><stop offset="0.7000" stop-color="rgb(128,128,128)"/><stop offset="0.7021" stop-color="rgb(128,128,128)"/><stop offset="0.7043" stop-color="rgb(128,128,128)"/><stop offset="0.7064" stop-color="rgb(128,128,128)"/><stop offset="0.7085" stop-color="rgb(127,127,127)"/><stop offset="0.7106" stop-color="rgb(127,127,127)"/><stop offset="0.7128" stop-color="rgb(127,127,127)"/><stop offset="0.7149" stop-color="rgb(127,127,127)"/><stop offset="0.7170" stop-color="rgb(127,127,127)"/><stop offset="0.7191" stop-color="rgb(127,127,127)"/><stop offset="0.7213" stop-color="rgb(127,127,127)"/><stop offset="0.7234" stop-color="rgb(128,128,128)"/><stop offset="0.7255" stop-color="rgb(128,128,128)"/><stop offset="0.7277" stop-color="rgb(128,128,128)"/><stop offset="0.7298" stop-color="rgb(128,128,128)"/><stop offset="0.7319" stop-color="rgb(128,128,128)"/><stop offset="0.7340" stop-color="rgb(128,128,128)"/><stop offset="0.7362" stop-color="rgb(129,129,129)"/><stop offset="0.7383" stop-color="rgb(129,129,129)"/><stop offset="0.7404" stop-color="rgb(129,129,129)"/><stop offset="0.7426" stop-color="rgb(130,130,130)"/><stop offset="0.7447" stop-color="rgb(132,132,132)"/><stop offset="0.7468" stop-color="rgb(133,133,133)"/><stop offset="0.7489" stop-color="rgb(135,135,135)"/><stop offset="0.7511" stop-color="rgb(136,136,136)"/><stop offset="0.7532" stop-color="rgb(138,138,138)"/><stop offset="0.7553" stop-color="rgb(139,139,139)"/><stop offset="0.7574" stop-color="rgb(140,140,140)"/><stop offset="0.7596" stop-color="rgb(141,141,141)"/><stop offset="0.7617" stop-color="rgb(142,142,142)"/><stop offset="0.7638" stop-color="rgb(142,142,142)"/><stop offset="0.7660" stop-color="rgb(142,142,142)"/><stop offset="0.7681" stop-color="rgb(142,142,142)"/><stop offset="0.7702" stop-color="rgb(141,141,141)"/><stop offset="0.7723" stop-color="rgb(141,141,141)"/><stop offset="0.7745" stop-color="rgb(141,141,141)"/><stop offset="0.7766" stop-color="rgb(141,141,141)"/><stop offset="0.7787" stop-color="rgb(140,140,140)"/><stop offset="0.7809" stop-color="rgb(139,139,139)"/><stop offset="0.7830" stop-color="rgb(138,138,138)"/><stop offset="0.7851" stop-color="rgb(137,137,137)"/><stop offset="0.7872" stop-color="rgb(136,136,136)"/><stop offset="0.7894" stop-color="rgb(136,136,136)"/><stop offset="0.7915" stop-color="rgb(135,135,135)"/><stop offset="0.7936" stop-color="rgb(133,133,133)"/><stop offset="0.7957" stop-color="rgb(132,132,132)"/><stop offset="0.7979" stop-color="rgb(130,130,130)"/><stop offset="0.8000" stop-color="rgb(129,129,129)"/><stop offset="0.8021" stop-color="rgb(128,128,128)"/><stop offset="0.8043" stop-color="rgb(127,127,127)"/><stop offset="0.8064" stop-color="rgb(127,127,127)"/><stop offset="0.8085" stop-color="rgb(126,126,126)"/><stop offset="0.8106" stop-color="rgb(126,126,126)"/><stop offset="0.8128" stop-color="rgb(125,125,125)"/><stop offset="0.8149" stop-color="rgb(125,125,125)"/><stop offset="0.8170" stop-color="rgb(124,124,124)"/><stop offset="0.8191" stop-color="rgb(124,124,124)"/><stop offset="0.8213" stop-color="rgb(123,123,123)"/><stop offset="0.8234" stop-color="rgb(123,123,123)"/><stop offset="0.8255" stop-color="rgb(123,123,123)"/><stop offset="0.8277" stop-color="rgb(123,123,123)"/><stop offset="0.8298" stop-color="rgb(123,123,123)"/><stop offset="0.8319" stop-color="rgb(123,123,123)"/><stop offset="0.8340" stop-color="rgb(124,124,124)"/><stop offset="0.8362" stop-color="rgb(124,124,124)"/><stop offset="0.8383" stop-color="rgb(124,124,124)"/><stop offset="0.8404" stop-color="rgb(124,124,124)"/><stop offset="0.8426" stop-color="rgb(124,124,124)"/><stop offset="0.8447" stop-color="rgb(126,126,126)"/><stop offset="0.8468" stop-color="rgb(129,129,129)"/><stop offset="0.8489" stop-color="rgb(131,131,131)"/><stop offset="0.8511" stop-color="rgb(134,134,134)"/><stop offset="0.8532" stop-color="rgb(138,138,138)"/><stop offset="0.8553" stop-color="rgb(142,142,142)"/><stop offset="0.8574" stop-color="rgb(145,145,145)"/><stop offset="0.8596" stop-color="rgb(146,146,146)"/><stop offset="0.8617" stop-color="rgb(148,148,148)"/><stop offset="0.8638" stop-color="rgb(150,150,150)"/><stop offset="0.8660" stop-color="rgb(151,151,151)"/><stop offset="0.8681" stop-color="rgb(149,149,149)"/><stop offset="0.8702" stop-color="rgb(148,148,148)"/><stop offset="0.8723" stop-color="rgb(147,147,147)"/><stop offset="0.8745" stop-color="rgb(145,145,145)"/><stop offset="0.8766" stop-color="rgb(142,142,142)"/><stop offset="0.8787" stop-color="rgb(138,138,138)"/><stop offset="0.8809" stop-color="rgb(135,135,135)"/><stop offset="0.8830" stop-color="rgb(132,132,132)"/><stop offset="0.8851" stop-color="rgb(129,129,129)"/><stop offset="0.8872" stop-color="rgb(126,126,126)"/><stop offset="0.8894" stop-color="rgb(124,124,124)"/><stop offset="0.8915" stop-color="rgb(122,122,122)"/><stop offset="0.8936" stop-color="rgb(120,120,120)"/><stop offset="0.8957" stop-color="rgb(118,118,118)"/><stop offset="0.8979" stop-color="rgb(117,117,117)"/><stop offset="0.9000" stop-color="rgb(116,116,116)"/><stop offset="0.9021" stop-color="rgb(115,115,115)"/><stop offset="0.9043" stop-color="rgb(114,114,114)"/><stop offset="0.9064" stop-color="rgb(114,114,114)"/><stop offset="0.9085" stop-color="rgb(113,113,113)"/><stop offset="0.9106" stop-color="rgb(112,112,112)"/><stop offset="0.9128" stop-color="rgb(112,112,112)"/><stop offset="0.9149" stop-color="rgb(111,111,111)"/><stop offset="0.9170" stop-color="rgb(110,110,110)"/><stop offset="0.9191" stop-color="rgb(110,110,110)"/><stop offset="0.9213" stop-color="rgb(109,109,109)"/><stop offset="0.9234" stop-color="rgb(109,109,109)"/><stop offset="0.9255" stop-color="rgb(108,108,108)"/><stop offset="0.9277" stop-color="rgb(108,108,108)"/><stop offset="0.9298" stop-color="rgb(107,107,107)"/><stop offset="0.9319" stop-color="rgb(107,107,107)"/><stop offset="0.9340" stop-color="rgb(106,106,106)"/><stop offset="0.9362" stop-color="rgb(106,106,106)"/><stop offset="0.9383" stop-color="rgb(105,105,105)"/><stop offset="0.9404" stop-color="rgb(105,105,105)"/><stop offset="0.9426" stop-color="rgb(105,105,105)"/><stop offset="0.9447" stop-color="rgb(104,104,104)"/><stop offset="0.9468" stop-color="rgb(104,104,104)"/><stop offset="0.9489" stop-color="rgb(104,104,104)"/><stop offset="0.9511" stop-color="rgb(104,104,104)"/><stop offset="0.9532" stop-color="rgb(103,103,103)"/><stop offset="0.9553" stop-color="rgb(103,103,103)"/><stop offset="0.9574" stop-color="rgb(103,103,103)"/><stop offset="0.9596" stop-color="rgb(103,103,103)"/><stop offset="0.9617" stop-color="rgb(103,103,103)"/><stop offset="0.9638" stop-color="rgb(103,103,103)"/><stop offset="0.9660" stop-color="rgb(103,103,103)"/><stop offset="0.9681" stop-color="rgb(103,103,103)"/><stop offset="0.9702" stop-color="rgb(103,103,103)"/><stop offset="0.9723" stop-color="rgb(103,103,103)"/><stop offset="0.9745" stop-color="rgb(103,103,103)"/><stop offset="0.9766" stop-color="rgb(103,103,103)"/><stop offset="0.9787" stop-color="rgb(103,103,103)"/><stop offset="0.9809" stop-color="rgb(103,103,103)"/><stop offset="0.9830" stop-color="rgb(103,103,103)"/><stop offset="0.9851" stop-color="rgb(103,103,103)"/><stop offset="0.9872" stop-color="rgb(103,103,103)"/><stop offset="0.9894" stop-color="rgb(103,103,103)"/><stop offset="0.9915" stop-color="rgb(103,103,103)"/><stop offset="0.9936" stop-color="rgb(103,103,103)"/><stop offset="0.9957" stop-color="rgb(103,103,103)"/><stop offset="0.9979" stop-color="rgb(103,103,103)"/><stop offset="1.0000" stop-color="rgb(103,103,103)"/></linearGradient><filter id="wf" x="-60" y="0" width="1410" height="578" filterUnits="userSpaceOnUse" primitiveUnits="userSpaceOnUse" color-interpolation-filters="sRGB"><feTurbulence type="fractalNoise" baseFrequency="0.0016 0.22" numOctaves="2" seed="11" result="t2"/><feColorMatrix in="t2" type="matrix" values="1 0 0 0 0 0 0 0 0 0.5 0 0 0 0 0.5 0 0 0 0 1" result="dm"/><feDisplacementMap in="SourceGraphic" in2="dm" scale="70" xChannelSelector="R" yChannelSelector="G" result="g2"/><feTurbulence type="fractalNoise" baseFrequency="0.5 0.5" numOctaves="1" seed="3" result="t1"/><feColorMatrix in="t1" type="matrix" values="1 0 0 0 0 1 0 0 0 0 1 0 0 0 0 0 0 0 0 1" result="n1"/><feTurbulence type="fractalNoise" baseFrequency="0.05 0.5" numOctaves="1" seed="5" result="t3"/><feColorMatrix in="t3" type="matrix" values="1 0 0 0 0 1 0 0 0 0 1 0 0 0 0 0 0 0 0 1" result="n3"/><feComposite in="g2" in2="n1" operator="arithmetic" k1="0" k2="1" k3="0.24" k4="-0.12" result="c1"/><feComposite in="c1" in2="n3" operator="arithmetic" k1="0" k2="1" k3="0.22" k4="-0.11" result="c2"/><feColorMatrix in="t2" type="matrix" values="1 0 0 0 0 1 0 0 0 0 1 0 0 0 0 0 0 0 0 1" result="n2"/><feComposite in="c2" in2="n2" operator="arithmetic" k1="0" k2="1" k3="0.1" k4="-0.05" result="c3"/><feComponentTransfer in="c3" result="col"><feFuncR type="table" tableValues="0 0 0 0 0 0 0 0 0 0 0 0 0 0 0 0 0 0 0 0 0 0 0 0 0 0 0 0 0 0 0 0 0 0 0 0 0 0 0 0 0 0 0 0 0 0 0 0 0 0 0 0 0 0 0 0 0 0 0 0 0 0 0 0 0 0 0 0 0 0 0 0 0 0 0 0 0 0 0 0 0 0 0 0 0 0 0 0 0 0 0 0 0 0 0 0 0 0 0 0 0 0 0 0 0 0 0 0 0 0 0 0 0 0 0 0 0 0 0 0 0 0.03 0.061 0.091 0.121 0.152 0.182 0.212 0.242 0.273 0.303 0.333 0.364 0.394 0.424 0.455 0.485 0.515 0.545 0.576 0.606 0.636 0.667 0.697 0.727 0.758 0.788 0.818 0.848 0.879 0.909 0.939 0.97 1 1 1 1 1 1 1 1 1 1 1 1 1 1 1 1 1 1 1 1 1 1 1 1 1 1 1 1 1 1 1 1 1 1 1 1 1 1 1 1 1 1 1 1 1 1 1 1 1 1 1 1 1 1 1 1 1 1 1 1 1 1 1 1 1 1 1 1 1 1 1 1 1 1 1 1 1 1 1 1 1 1 1 1 1 1 1 1 1 1 1 1 1 1 1 1 1 1 1 1 1 1 1"/><feFuncG type="table" tableValues="0 0 0 0 0 0 0 0 0 0 0 0 0 0 0 0 0 0 0 0 0 0 0 0 0 0 0 0 0 0 0 0 0 0 0 0 0 0 0 0 0 0 0 0 0.023 0.047 0.07 0.093 0.116 0.14 0.163 0.186 0.209 0.233 0.256 0.279 0.302 0.326 0.349 0.372 0.395 0.419 0.442 0.465 0.488 0.512 0.535 0.558 0.581 0.605 0.628 0.651 0.674 0.698 0.721 0.744 0.767 0.791 0.814 0.837 0.86 0.884 0.907 0.93 0.953 0.977 1 1 1 1 1 1 1 1 1 1 1 1 1 1 1 1 1 1 1 1 1 1 1 1 1 1 1 1 1 1 1 1 1 1 1 1 1 1 1 1 1 1 1 1 1 1 1 1 1 1 1 1 1 1 1 1 1 1 1 1 1 1 1 1 1 1 1 1 1 0.984 0.968 0.952 0.935 0.919 0.903 0.887 0.871 0.855 0.839 0.823 0.806 0.79 0.774 0.758 0.742 0.726 0.71 0.694 0.677 0.661 0.645 0.629 0.613 0.597 0.581 0.565 0.548 0.532 0.516 0.5 0.484 0.468 0.452 0.435 0.419 0.403 0.387 0.371 0.355 0.339 0.323 0.306 0.29 0.274 0.258 0.242 0.226 0.21 0.194 0.177 0.161 0.145 0.129 0.113 0.097 0.081 0.065 0.048 0.032 0.016 0 0 0 0 0 0 0 0 0 0 0 0 0 0 0 0 0 0 0 0 0 0 0 0 0 0 0 0 0 0 0 0 0 0 0 0 0 0 0 0"/><feFuncB type="table" tableValues="0 0.023 0.047 0.07 0.093 0.116 0.14 0.163 0.186 0.209 0.233 0.256 0.279 0.302 0.326 0.349 0.372 0.395 0.419 0.442 0.465 0.488 0.512 0.535 0.558 0.581 0.605 0.628 0.651 0.674 0.698 0.721 0.744 0.767 0.791 0.814 0.837 0.86 0.884 0.907 0.93 0.953 0.977 1 1 1 1 1 1 1 1 1 1 1 1 1 1 1 1 1 1 1 1 1 1 1 1 1 1 1 1 1 1 1 1 1 1 1 1 1 1 1 1 1 1 1 1 1 0.969 0.938 0.906 0.875 0.844 0.812 0.781 0.75 0.719 0.688 0.656 0.625 0.594 0.562 0.531 0.5 0.469 0.438 0.406 0.375 0.344 0.312 0.281 0.25 0.219 0.188 0.156 0.125 0.094 0.062 0.031 0 0 0 0 0 0 0 0 0 0 0 0 0 0 0 0 0 0 0 0 0 0 0 0 0 0 0 0 0 0 0 0 0 0 0 0 0 0 0 0 0 0 0 0 0 0 0 0 0 0 0 0 0 0 0 0 0 0 0 0 0 0 0 0 0 0 0 0 0 0 0 0 0 0 0 0 0 0 0 0 0 0 0 0 0 0 0 0 0 0 0 0 0 0 0 0 0 0 0 0.013 0.026 0.04 0.053 0.066 0.079 0.092 0.106 0.119 0.132 0.145 0.159 0.172 0.185 0.198 0.211 0.225 0.238 0.251 0.264 0.277 0.291 0.304 0.317 0.33 0.343 0.357 0.37 0.383 0.396 0.409 0.423 0.436 0.449 0.462 0.476 0.489 0.502"/></feComponentTransfer><feFlood x="-60" y="0" width="1" height="1" flood-color="#000" result="d1"/><feOffset in="d1" dx="0" dy="0" x="-60" y="0" width="2" height="2" result="cell"/><feTile in="cell" result="grid"/><feComposite in="col" in2="grid" operator="in" result="samp"/><feOffset in="samp" dx="1" dy="0" result="s1"/><feMerge result="row"><feMergeNode in="samp"/><feMergeNode in="s1"/></feMerge><feOffset in="row" dx="0" dy="1" result="r1"/><feMerge><feMergeNode in="row"/><feMergeNode in="r1"/></feMerge></filter></defs><rect x="-60" y="0" width="1410" height="578" fill="url(#wg)" filter="url(#wf)"/><rect x="644" y="0" width="2" height="578" fill="#d4ff10" fill-opacity="0.95"/><rect x="1288" y="0" width="2" height="578" fill="#000"/></svg>
<svg width="0" height="0" style="left:0;top:0"><defs>
<linearGradient id="hb" x1="0" y1="0" x2="1" y2="1"><stop offset="0" stop-color="#7ea6d9"/><stop offset="1" stop-color="#2f5fa3"/></linearGradient>
<symbol id="tool" viewBox="0 0 40 40">
 <path d="M37 3.500 L20 20.500" stroke="#8d8f8a" stroke-width="4.2" stroke-linecap="butt" fill="none"/>
 <path d="M37 3.500 L20 20.500" stroke="#dfe1dc" stroke-width="2" fill="none"/>
 <path d="M32.500 4.500 L36 1 L39 4 L35.500 7.500 Z" fill="#e3e5e0" stroke="#8d8f8a" stroke-width="1.2"/>
 <path d="M10 10 L33.500 33.500" stroke="#9b9d98" stroke-width="8.4" stroke-linecap="round" fill="none"/>
 <path d="M10 10 L33.500 33.500" stroke="#dcdfd8" stroke-width="5.800" stroke-linecap="round" fill="none"/>
 <circle cx="9" cy="8.500" r="7.300" fill="#dcdfd8" stroke="#9b9d98" stroke-width="1.400"/>
 <path d="M9.500 9.500 L6 -1.500 L-2 6.500 Z" fill="#fafafa"/>
 <path d="M3.200 4.200 L8.500 8.200 L7.200 1.400" fill="none" stroke="#9b9d98" stroke-width="1.300"/>
 <circle cx="33" cy="33" r="5.500" fill="#dcdfd8" stroke="#9b9d98" stroke-width="1.400"/>
 <circle cx="33.500" cy="33.500" r="2.200" fill="#f2f2f0" stroke="#9b9d98" stroke-width="1"/>
 <path d="M17.500 22.500 L5.500 34.500" stroke="#2b5591" stroke-width="10" stroke-linecap="round" fill="none"/>
 <path d="M17.500 22.500 L5.500 34.500" stroke="url(#hb)" stroke-width="7.600" stroke-linecap="round" fill="none"/>
 <path d="M15.500 20.500 L4 32" stroke="#9dbfe8" stroke-width="1.600" stroke-linecap="round" fill="none" opacity=".8"/>
 <path d="M19 24 L22.500 20.500 L19.500 17.500 L16 21 Z" fill="#b9bbb6" stroke="#8d8f8a" stroke-width="1"/>
</symbol>
<symbol id="toolg" viewBox="0 0 40 40">
 <path d="M37 3.500 L20 20.500" stroke="#bcbdb9" stroke-width="4.2" fill="none"/>
 <path d="M37 3.500 L20 20.500" stroke="#e6e7e4" stroke-width="2" fill="none"/>
 <path d="M32.500 4.500 L36 1 L39 4 L35.500 7.500 Z" fill="#e9eae7" stroke="#bcbdb9" stroke-width="1.2"/>
 <path d="M10 10 L33.500 33.500" stroke="#c2c3bf" stroke-width="8.4" stroke-linecap="round" fill="none"/>
 <path d="M10 10 L33.500 33.500" stroke="#e4e5e2" stroke-width="5.800" stroke-linecap="round" fill="none"/>
 <circle cx="9" cy="8.500" r="7.300" fill="#e4e5e2" stroke="#c2c3bf" stroke-width="1.400"/>
 <path d="M9.500 9.500 L6 -1.500 L-2 6.500 Z" fill="#efeeed"/>
 <path d="M3.200 4.200 L8.500 8.200 L7.200 1.400" fill="none" stroke="#c2c3bf" stroke-width="1.300"/>
 <circle cx="33" cy="33" r="5.500" fill="#e4e5e2" stroke="#c2c3bf" stroke-width="1.400"/>
 <circle cx="33.500" cy="33.500" r="2.200" fill="#efeeed" stroke="#c2c3bf" stroke-width="1"/>
 <path d="M17.500 22.500 L5.500 34.500" stroke="#a9aaa7" stroke-width="10" stroke-linecap="round" fill="none"/>
 <path d="M17.500 22.500 L5.500 34.500" stroke="#c3c4c1" stroke-width="7.600" stroke-linecap="round" fill="none"/>
</symbol>
</defs></svg>
<svg style="left:0;top:0" width="1800" height="1502" shape-rendering="crispEdges"><rect x="1292" y="810" width="4" height="4" fill="#fdfdfd"/><rect x="1292" y="810" width="2" height="2" fill="#a09d99"/><rect x="1298" y="810" width="4" height="4" fill="#fdfdfd"/><rect x="1298" y="810" width="2" height="2" fill="#a09d99"/><rect x="1292" y="816" width="4" height="4" fill="#fdfdfd"/><rect x="1292" y="816" width="2" height="2" fill="#a09d99"/><rect x="1298" y="816" width="4" height="4" fill="#fdfdfd"/><rect x="1298" y="816" width="2" height="2" fill="#a09d99"/><rect x="1292" y="822" width="4" height="4" fill="#fdfdfd"/><rect x="1292" y="822" width="2" height="2" fill="#a09d99"/><rect x="1298" y="822" width="4" height="4" fill="#fdfdfd"/><rect x="1298" y="822" width="2" height="2" fill="#a09d99"/><rect x="1292" y="828" width="4" height="4" fill="#fdfdfd"/><rect x="1292" y="828" width="2" height="2" fill="#a09d99"/><rect x="1298" y="828" width="4" height="4" fill="#fdfdfd"/><rect x="1298" y="828" width="2" height="2" fill="#a09d99"/><rect x="1292" y="834" width="4" height="4" fill="#fdfdfd"/><rect x="1292" y="834" width="2" height="2" fill="#a09d99"/><rect x="1298" y="834" width="4" height="4" fill="#fdfdfd"/><rect x="1298" y="834" width="2" height="2" fill="#a09d99"/><rect x="1292" y="840" width="4" height="4" fill="#fdfdfd"/><rect x="1292" y="840" width="2" height="2" fill="#a09d99"/><rect x="1298" y="840" width="4" height="4" fill="#fdfdfd"/><rect x="1298" y="840" width="2" height="2" fill="#a09d99"/><rect x="1534" y="913" width="4" height="4" fill="#fbfbfa"/><rect x="1534" y="913" width="2" height="2" fill="#cfcdca"/><rect x="1534" y="919" width="4" height="4" fill="#fbfbfa"/><rect x="1534" y="919" width="2" height="2" fill="#cfcdca"/><rect x="1540" y="913" width="4" height="4" fill="#fbfbfa"/><rect x="1540" y="913" width="2" height="2" fill="#cfcdca"/><rect x="1540" y="919" width="4" height="4" fill="#fbfbfa"/><rect x="1540" y="919" width="2" height="2" fill="#cfcdca"/><rect x="1546" y="913" width="4" height="4" fill="#fbfbfa"/><rect x="1546" y="913" width="2" height="2" fill="#cfcdca"/><rect x="1546" y="919" width="4" height="4" fill="#fbfbfa"/><rect x="1546" y="919" width="2" height="2" fill="#cfcdca"/><rect x="1552" y="913" width="4" height="4" fill="#fbfbfa"/><rect x="1552" y="913" width="2" height="2" fill="#cfcdca"/><rect x="1552" y="919" width="4" height="4" fill="#fbfbfa"/><rect x="1552" y="919" width="2" height="2" fill="#cfcdca"/><rect x="1558" y="913" width="4" height="4" fill="#fbfbfa"/><rect x="1558" y="913" width="2" height="2" fill="#cfcdca"/><rect x="1558" y="919" width="4" height="4" fill="#fbfbfa"/><rect x="1558" y="919" width="2" height="2" fill="#cfcdca"/><rect x="1564" y="913" width="4" height="4" fill="#fbfbfa"/><rect x="1564" y="913" width="2" height="2" fill="#cfcdca"/><rect x="1564" y="919" width="4" height="4" fill="#fbfbfa"/><rect x="1564" y="919" width="2" height="2" fill="#cfcdca"/><rect x="1794" y="1478" width="4" height="4" fill="#fbfbfa"/><rect x="1794" y="1478" width="2" height="2" fill="#b4b2ae"/><rect x="1794" y="1484" width="4" height="4" fill="#fbfbfa"/><rect x="1794" y="1484" width="2" height="2" fill="#b4b2ae"/><rect x="1788" y="1484" width="4" height="4" fill="#fbfbfa"/><rect x="1788" y="1484" width="2" height="2" fill="#b4b2ae"/><rect x="1794" y="1490" width="4" height="4" fill="#fbfbfa"/><rect x="1794" y="1490" width="2" height="2" fill="#b4b2ae"/><rect x="1788" y="1490" width="4" height="4" fill="#fbfbfa"/><rect x="1788" y="1490" width="2" height="2" fill="#b4b2ae"/><rect x="1782" y="1490" width="4" height="4" fill="#fbfbfa"/><rect x="1782" y="1490" width="2" height="2" fill="#b4b2ae"/><rect x="1794" y="1496" width="4" height="4" fill="#fbfbfa"/><rect x="1794" y="1496" width="2" height="2" fill="#b4b2ae"/><rect x="1788" y="1496" width="4" height="4" fill="#fbfbfa"/><rect x="1788" y="1496" width="2" height="2" fill="#b4b2ae"/><rect x="1782" y="1496" width="4" height="4" fill="#fbfbfa"/><rect x="1782" y="1496" width="2" height="2" fill="#b4b2ae"/><rect x="1776" y="1496" width="4" height="4" fill="#fbfbfa"/><rect x="1776" y="1496" width="2" height="2" fill="#b4b2ae"/></svg>
<div class="t" style="left:1304.5px;top:217px;letter-spacing:0.25px">Receiver Options</div>
<svg style="left:1736px;top:216px" width="62" height="26" viewBox="1736 216 62 26" shape-rendering="crispEdges"><rect x="1739" y="219" width="20" height="20" fill="none" stroke="#fafaf9" stroke-width="2" shape-rendering="auto" rx="2"/><g fill="#5e5b56"><rect x="1740" y="218" width="18" height="2"/><rect x="1740" y="238" width="18" height="2"/><rect x="1738" y="220" width="2" height="18"/><rect x="1758" y="220" width="2" height="18"/></g><rect x="1773" y="219" width="20" height="20" fill="none" stroke="#fafaf9" stroke-width="2" shape-rendering="auto" rx="2"/><g fill="#5e5b56"><rect x="1774" y="218" width="18" height="2"/><rect x="1774" y="238" width="18" height="2"/><rect x="1772" y="220" width="2" height="18"/><rect x="1792" y="220" width="2" height="18"/></g><g fill="#5e5b56"><rect x="1746" y="222" width="10" height="2"/><rect x="1754" y="222" width="2" height="10"/><rect x="1752" y="230" width="4" height="2"/><rect x="1746" y="222" width="2" height="4"/><rect x="1742" y="226" width="10" height="2"/><rect x="1742" y="234" width="10" height="2"/><rect x="1742" y="226" width="2" height="10"/><rect x="1750" y="226" width="2" height="10"/></g><path d="M1778.500 224.5 L1787.500 233.5 M1787.500 224.5 L1778.500 233.5" stroke="#6a6762" stroke-width="4.2" stroke-linecap="square" fill="none" shape-rendering="auto"/></svg>
<div class="a" style="left:1320px;top:272px;width:400px;height:64px;background:#1f1d1d"></div>
<div class="t bd" style="left:1378.6px;width:50px;top:272.2px;height:64px;line-height:63px;text-align:center;font-size:53px;color:#ffe6c8">2</div>
<div class="t bd" style="left:1417.5px;width:50px;top:272.2px;height:64px;line-height:63px;text-align:center;font-size:53px;color:#ffe6c8">0</div>
<div class="t bd" style="left:1458.4px;width:50px;top:272.2px;height:64px;line-height:63px;text-align:center;font-size:53px;color:#ffe6c8">3</div>
<div class="t bd" style="left:1510.4px;width:50px;top:272.2px;height:64px;line-height:63px;text-align:center;font-size:53px;color:#ffe6c8">1</div>
<div class="t bd" style="left:1550.2px;width:50px;top:272.2px;height:64px;line-height:63px;text-align:center;font-size:53px;color:#ffe6c8">0</div>
<div class="t bd" style="left:1589.4px;width:50px;top:272.2px;height:64px;line-height:63px;text-align:center;font-size:53px;color:#ffe6c8">0</div>
<div class="t bd" style="left:1497.6px;width:24px;top:272.2px;height:64px;line-height:63px;text-align:center;font-size:53px;color:#ffe6c8">.</div>
<div class="t bd" style="left:1645px;top:272px;height:64px;line-height:64px;font-size:35.5px;color:#a0a0a4">kHz</div>
<div class="t" style="left:1317.5px;top:356px;letter-spacing:0.65px">Hardware freq:</div>
<div class="t" style="left:1540px;top:356px;letter-spacing:1.5px">104.700000 MHz</div>
<div class="sep" style="left:1320px;top:402px;width:462px"></div>
<div class="t" style="left:1318px;top:433px;letter-spacing:1.3px">Filter</div>
<div class="btn" style="left:1416px;top:422px;width:288px;height:52px;background:linear-gradient(#ffffff,#f7f7f6 49%,#efeeed 51%,#e8e7e5)"></div>
<div class="t" style="left:1426px;top:433px;letter-spacing:0.2px;white-space:pre">Normal</div>
<div class="a" style="left:1662px;top:430px;width:2px;height:36px;background:#c3c1bd"></div><div class="a" style="left:1664px;top:430px;width:2px;height:36px;background:#fdfdfd"></div>
<svg style="left:1672px;top:436px" width="20" height="24" viewBox="0 0 20 24"><path d="M4 8.500 L10 3 L16 8.500 M4 15.500 L10 21 L16 15.500" fill="none" stroke="#3a3a3a" stroke-width="2.300"/></svg>
<div class="t" style="left:1318px;top:499px;letter-spacing:1.3px">Mode</div>
<div class="btn" style="left:1416px;top:488px;width:288px;height:52px;background:linear-gradient(#f8fafd,#eff2f8 49%,#e3e8f1 51%,#dce2ed)"></div>
<div class="t" style="left:1426px;top:499px;letter-spacing:0.25px;white-space:pre">Wide FM  (stereo)</div>
<div class="a" style="left:1662px;top:496px;width:2px;height:36px;background:#c3c1bd"></div><div class="a" style="left:1664px;top:496px;width:2px;height:36px;background:#fdfdfd"></div>
<svg style="left:1672px;top:502px" width="20" height="24" viewBox="0 0 20 24"><path d="M4 8.500 L10 3 L16 8.500 M4 15.500 L10 21 L16 15.500" fill="none" stroke="#3a3a3a" stroke-width="2.300"/></svg>
<div class="t" style="left:1318px;top:565px;letter-spacing:1.3px">AGC</div>
<div class="btn" style="left:1416px;top:554px;width:288px;height:52px;background:linear-gradient(#ffffff,#f7f7f6 49%,#efeeed 51%,#e8e7e5)"></div>
<div class="t" style="left:1426px;top:565px;letter-spacing:0.35px;white-space:pre">Fast</div>
<div class="a" style="left:1662px;top:562px;width:2px;height:36px;background:#c3c1bd"></div><div class="a" style="left:1664px;top:562px;width:2px;height:36px;background:#fdfdfd"></div>
<svg style="left:1672px;top:568px" width="20" height="24" viewBox="0 0 20 24"><path d="M4 8.500 L10 3 L16 8.500 M4 15.500 L10 21 L16 15.500" fill="none" stroke="#3a3a3a" stroke-width="2.300"/></svg>
<div class="btn tb dis" style="left:1728px;top:422px;width:52px;height:52px"></div>
<svg style="left:1740px;top:434px" width="28" height="28"><use href="#toolg" width="28" height="28"/></svg>
<div class="btn tb" style="left:1728px;top:488px;width:52px;height:52px"></div>
<svg style="left:1740px;top:501px" width="28" height="28"><use href="#tool" width="28" height="28"/></svg>
<div class="btn tb" style="left:1728px;top:554px;width:52px;height:52px"></div>
<svg style="left:1733px;top:561px" width="40" height="40"><use href="#tool" width="40" height="40"/></svg>
<div class="sep" style="left:1320px;top:620px;width:462px"></div>
<div class="btn" style="left:1322px;top:640px;width:188px;height:52px"></div>
<div class="t" style="left:1322px;width:188px;text-align:center;top:652px;letter-spacing:2.3px;text-indent:1px">NB1</div>
<div class="btn" style="left:1526px;top:640px;width:186px;height:52px"></div>
<div class="t" style="left:1526px;width:186px;text-align:center;top:652px;letter-spacing:2.3px;text-indent:1px">NB2</div>
<div class="btn tb" style="left:1728px;top:640px;width:52px;height:52px"></div>
<svg style="left:1733px;top:647px" width="40" height="40"><use href="#tool" width="40" height="40"/></svg>
<div class="sep" style="left:1320px;top:706px;width:462px"></div>
<div class="t" style="left:1383px;width:100px;text-align:center;top:732px;letter-spacing:2.5px;text-indent:2px">SQL</div>
<div class="t" style="left:1569px;width:200px;text-align:center;top:732px;letter-spacing:0.85px">-150 dBFS</div>
<div class="a" style="left:1328px;top:796px;width:448px;height:10px;box-sizing:border-box;border:2px solid #95928d;border-radius:2px;background:linear-gradient(#c9c7c3,#d6d4d1);box-shadow:0 2px 0 #fbfbfa"></div>
<div class="a" style="left:1326px;top:787px;width:42px;height:25px;box-sizing:border-box;border:2px solid #98958f;border-radius:6px;background:linear-gradient(#ffffff,#f4f3f2 50%,#e1e0dd);box-shadow:0 1px 1px rgba(0,0,0,.12)"></div>
<div class="a" style="left:1340px;top:794px;width:2px;height:9px;background:#6e6c68"></div>
<div class="a" style="left:1346px;top:794px;width:2px;height:9px;background:#6e6c68"></div>
<div class="a" style="left:1352px;top:794px;width:2px;height:9px;background:#6e6c68"></div>
<div class="a" style="left:1302px;top:844px;width:498px;height:2px;background:#aeaca8"></div>
<div class="a" style="left:1302px;top:844px;width:220px;height:62px;box-sizing:border-box;border:2px solid #aeaca7;border-top-color:#a7a5a0;border-radius:0 0 8px 8px;background:linear-gradient(#cdcbc8,#d6d4d1 40%,#e4e3e0)"></div>
<div class="t" style="left:1317.5px;top:861.5px;letter-spacing:0.65px">Input controls</div>
<div class="a" style="left:1520px;top:846px;width:254px;height:66px;box-sizing:border-box;border:2px solid #b5b3ae;border-top:none;border-bottom:none;border-radius:0 0 8px 8px;background:linear-gradient(#f1f0ef,#f8f8f7 50%,#ffffff);overflow:hidden"><div class="a" style="left:-2px;right:-2px;bottom:0;height:10px;border-radius:0 0 8px 8px;background:linear-gradient(#a3c0e6,#86a9da 60%,#5f86c0);box-sizing:border-box;border-bottom:2px solid #54789f"></div></div>
<div class="a" style="left:1520px;top:846px;width:2px;height:56px;background:#7f9fc9"></div>
<div class="t" style="left:1533px;top:865px;letter-spacing:0.35px">Receiver Options</div>
<div class="t" style="left:1306px;top:936px;letter-spacing:0.1px">Audio</div>
<svg style="left:1736px;top:936px" width="62" height="26" viewBox="1736 936 62 26" shape-rendering="crispEdges"><rect x="1739" y="939" width="20" height="20" fill="none" stroke="#fafaf9" stroke-width="2" shape-rendering="auto" rx="2"/><g fill="#5e5b56"><rect x="1740" y="938" width="18" height="2"/><rect x="1740" y="958" width="18" height="2"/><rect x="1738" y="940" width="2" height="18"/><rect x="1758" y="940" width="2" height="18"/></g><rect x="1773" y="939" width="20" height="20" fill="none" stroke="#fafaf9" stroke-width="2" shape-rendering="auto" rx="2"/><g fill="#5e5b56"><rect x="1774" y="938" width="18" height="2"/><rect x="1774" y="958" width="18" height="2"/><rect x="1772" y="940" width="2" height="18"/><rect x="1792" y="940" width="2" height="18"/></g><g fill="#5e5b56"><rect x="1746" y="942" width="10" height="2"/><rect x="1754" y="942" width="2" height="10"/><rect x="1752" y="950" width="4" height="2"/><rect x="1746" y="942" width="2" height="4"/><rect x="1742" y="946" width="10" height="2"/><rect x="1742" y="954" width="10" height="2"/><rect x="1742" y="946" width="2" height="10"/><rect x="1750" y="946" width="2" height="10"/></g><path d="M1778.500 944.5 L1787.500 953.5 M1787.500 944.5 L1778.500 953.5" stroke="#6a6762" stroke-width="4.2" stroke-linecap="square" fill="none" shape-rendering="auto"/></svg>
<svg style="left:1312px;top:984px" width="478" height="232" viewBox="1312 984 478 232"><rect x="1312" y="984" width="478" height="232" fill="url(#pg)"/><rect x="1312" y="984" width="478" height="2" fill="#000"/><rect x="1312" y="984" width="2" height="232" fill="#000"/><g stroke="#f0f0f0" stroke-opacity="0.27" stroke-width="2" stroke-dasharray="2 4" shape-rendering="crispEdges"><path d="M1359 984V1190"/><path d="M1407 984V1190"/><path d="M1455 984V1190"/><path d="M1503 984V1190"/><path d="M1551 984V1190"/><path d="M1599 984V1190"/><path d="M1647 984V1190"/><path d="M1695 984V1190"/><path d="M1743 984V1190"/><path d="M1372 1023H1790"/><path d="M1372 1061H1790"/><path d="M1372 1101H1790"/><path d="M1372 1139H1790"/><path d="M1372 1177H1790"/></g><path d="M1313 1092L1315 1102L1317 1106L1319 1114L1321 1106L1323 1112L1325 1116L1327 1126L1329 1114L1331 1108L1333 1108L1335 1118L1337 1118L1339 1110L1341 1106L1343 1112L1345 1112L1347 1112L1349 1110L1351 1124L1353 1118L1355 1126L1357 1126L1359 1136L1361 1144L1363 1134L1365 1142L1367 1140L1369 1136L1371 1124L1373 1132L1375 1134L1377 1138L1379 1144L1381 1140L1383 1154L1385 1150L1387 1140L1389 1148L1391 1146L1393 1138L1395 1130L1397 1134L1399 1146L1401 1148L1403 1146L1405 1144L1407 1144L1409 1144L1411 1142L1413 1158L1415 1146L1417 1152L1419 1154L1421 1156L1423 1144L1425 1144L1427 1150L1429 1144L1431 1146L1433 1132L1435 1130L1437 1126L1439 1124L1441 1126L1443 1124L1445 1126L1447 1122L1449 1126L1451 1130L1453 1120L1455 1130L1457 1114L1459 1122L1461 1120L1463 1118L1465 1122L1467 1132L1469 1126L1471 1122L1473 1130L1475 1130L1477 1128L1479 1130L1481 1124L1483 1124L1485 1124L1487 1120L1489 1126L1491 1122L1493 1122L1495 1120L1497 1120L1499 1122L1501 1130L1503 1122L1505 1116L1507 1124L1509 1128L1511 1126L1513 1126L1515 1124L1517 1118L1519 1128L1521 1122L1523 1128L1525 1128L1527 1126L1529 1126L1531 1138L1533 1136L1535 1142L1537 1134L1539 1150L1541 1150L1543 1150L1545 1146L1547 1140L1549 1152L1551 1142L1553 1140L1555 1138L1557 1144L1559 1136L1561 1138L1563 1142L1565 1152L1567 1148L1569 1136L1571 1146L1573 1146L1575 1144L1577 1146L1579 1152L1581 1148L1583 1140L1585 1152L1587 1148L1589 1156L1591 1148L1593 1150L1595 1140L1597 1144L1599 1148L1601 1144L1603 1146L1605 1150L1607 1156L1609 1154L1611 1144L1613 1152L1615 1144L1617 1156L1619 1158L1621 1146L1623 1158L1625 1168L1627 1166L1629 1166L1631 1168L1633 1174L1635 1160L1637 1166L1639 1170L1641 1168L1643 1180L1645 1192L1647 1180L1649 1186L1651 1186L1653 1194L1655 1194L1657 1198L1659 1204L1661 1202L1663 1216" fill="none" stroke="#97d097" stroke-width="2" shape-rendering="crispEdges"/></svg>
<div class="t pf" style="left:1300px;width:60px;text-align:right;top:1007px;font-size:22px;color:#d8baa1">-20</div>
<div class="t pf" style="left:1300px;width:60px;text-align:right;top:1045px;font-size:22px;color:#d8baa1">-40</div>
<div class="t pf" style="left:1300px;width:60px;text-align:right;top:1085px;font-size:22px;color:#d8baa1">-60</div>
<div class="t pf" style="left:1300px;width:60px;text-align:right;top:1123px;font-size:22px;color:#d8baa1">-80</div>
<div class="t pf" style="left:1300px;width:60px;text-align:right;top:1161px;font-size:22px;color:#d8baa1">-100</div>
<div class="t pf" style="left:1315.9px;width:80px;text-align:center;top:1189px;font-size:22px;color:#d8baa1;letter-spacing:-0.5px">2.4</div>
<div class="t pf" style="left:1363.8px;width:80px;text-align:center;top:1189px;font-size:22px;color:#d8baa1;letter-spacing:-0.5px">4.8</div>
<div class="t pf" style="left:1411.7px;width:80px;text-align:center;top:1189px;font-size:22px;color:#d8baa1;letter-spacing:-0.5px">7.2</div>
<div class="t pf" style="left:1459.6px;width:80px;text-align:center;top:1189px;font-size:22px;color:#d8baa1;letter-spacing:-0.5px">9.6</div>
<div class="t pf" style="left:1507.5px;width:80px;text-align:center;top:1189px;font-size:22px;color:#d8baa1;letter-spacing:-0.5px">12.0</div>
<div class="t pf" style="left:1555.4px;width:80px;text-align:center;top:1189px;font-size:22px;color:#d8baa1;letter-spacing:-0.5px">14.4</div>
<div class="t pf" style="left:1603.3px;width:80px;text-align:center;top:1189px;font-size:22px;color:#d8baa1;letter-spacing:-0.5px">16.8</div>
<div class="t pf" style="left:1651.2px;width:80px;text-align:center;top:1189px;font-size:22px;color:#d8baa1;letter-spacing:-0.5px">19.2</div>
<div class="t pf" style="left:1699.1px;width:80px;text-align:center;top:1189px;font-size:22px;color:#d8baa1;letter-spacing:-0.5px">21.6</div>
<div class="t" style="left:1378px;width:100px;text-align:center;top:1226px;letter-spacing:0px;text-indent:2px">Gain:</div>
<div class="t" style="left:1577px;width:200px;text-align:center;top:1226px;letter-spacing:0.8px">-20 dB</div>
<div class="a" style="left:1318px;top:1280px;width:466px;height:10px;box-sizing:border-box;border:2px solid #95928d;border-radius:2px;background:linear-gradient(#c9c7c3,#d6d4d1);box-shadow:0 2px 0 #fbfbfa"></div>
<div class="a" style="left:1318px;top:1280px;width:202px;height:10px;box-sizing:border-box;border:2px solid #5e88c2;border-radius:2px;background:linear-gradient(#9bbbe4,#7fa6d9)"></div>
<div class="a" style="left:1514px;top:1271px;width:42px;height:25px;box-sizing:border-box;border:2px solid #98958f;border-radius:6px;background:linear-gradient(#ffffff,#f4f3f2 50%,#e1e0dd);box-shadow:0 1px 1px rgba(0,0,0,.12)"></div>
<div class="a" style="left:1528px;top:1278px;width:2px;height:9px;background:#6e6c68"></div>
<div class="a" style="left:1534px;top:1278px;width:2px;height:9px;background:#6e6c68"></div>
<div class="a" style="left:1540px;top:1278px;width:2px;height:9px;background:#6e6c68"></div>
<div class="btn tb dis" style="left:1314px;top:1310px;width:60px;height:60px"></div>
<svg style="left:1324px;top:1320px" width="40" height="40"><use href="#toolg" width="40" height="40"/></svg>
<div class="btn tb" style="left:1378px;top:1310px;width:60px;height:60px"></div>
<svg style="left:1390px;top:1322px" width="36" height="36" viewBox="0 0 36 36"><defs><radialGradient id="rg" cx="0.4" cy="0.3" r="0.75"><stop offset="0" stop-color="#ff5a55"/><stop offset="0.35" stop-color="#ee1111"/><stop offset="1" stop-color="#c80000"/></radialGradient></defs><circle cx="18" cy="18" r="14" fill="url(#rg)"/></svg>
<div class="btn tb dis" style="left:1442px;top:1310px;width:60px;height:60px"></div>
<svg style="left:1456px;top:1322px" width="36" height="36" viewBox="0 0 36 36"><path d="M6 4.500 L27 18 L6 31.500 Z" fill="#ededec" stroke="#c6c5c2" stroke-width="2" stroke-linejoin="round"/></svg>
<div class="t" style="left:1596px;width:100px;text-align:center;top:1324px;letter-spacing:1.5px">--</div>
<div class="a" style="left:1302px;top:1382px;width:498px;height:2px;background:#aeaca8"></div>
<div class="a" style="left:1302px;top:1382px;width:200px;height:62px;box-sizing:border-box;border:2px solid #aeaca7;border-top-color:#a7a5a0;border-radius:0 0 8px 8px;background:linear-gradient(#cdcbc8,#d6d4d1 40%,#e4e3e0)"></div>
<div class="t" style="left:1314px;top:1401px;letter-spacing:0.8px">FFT Settings</div>
<div class="a" style="left:1500px;top:1384px;width:104px;height:66px;box-sizing:border-box;border:2px solid #b5b3ae;border-top:none;border-bottom:none;border-radius:0 0 8px 8px;background:linear-gradient(#f1f0ef,#f8f8f7 50%,#ffffff);overflow:hidden"><div class="a" style="left:-2px;right:-2px;bottom:0;height:10px;border-radius:0 0 8px 8px;background:linear-gradient(#a3c0e6,#86a9da 60%,#5f86c0);box-sizing:border-box;border-bottom:2px solid #54789f"></div></div>
<div class="a" style="left:1500px;top:1384px;width:2px;height:56px;background:#7f9fc9"></div>
<div class="t" style="left:1514px;top:1401.5px;letter-spacing:0.1px">Audio</div>
<div class="a" style="left:0;top:1450px;width:1800px;height:2px;background:#c4c2be"></div>
<div class="a" style="left:0;top:1452px;width:1800px;height:2px;background:#f6f6f5"></div>
</body></html>
